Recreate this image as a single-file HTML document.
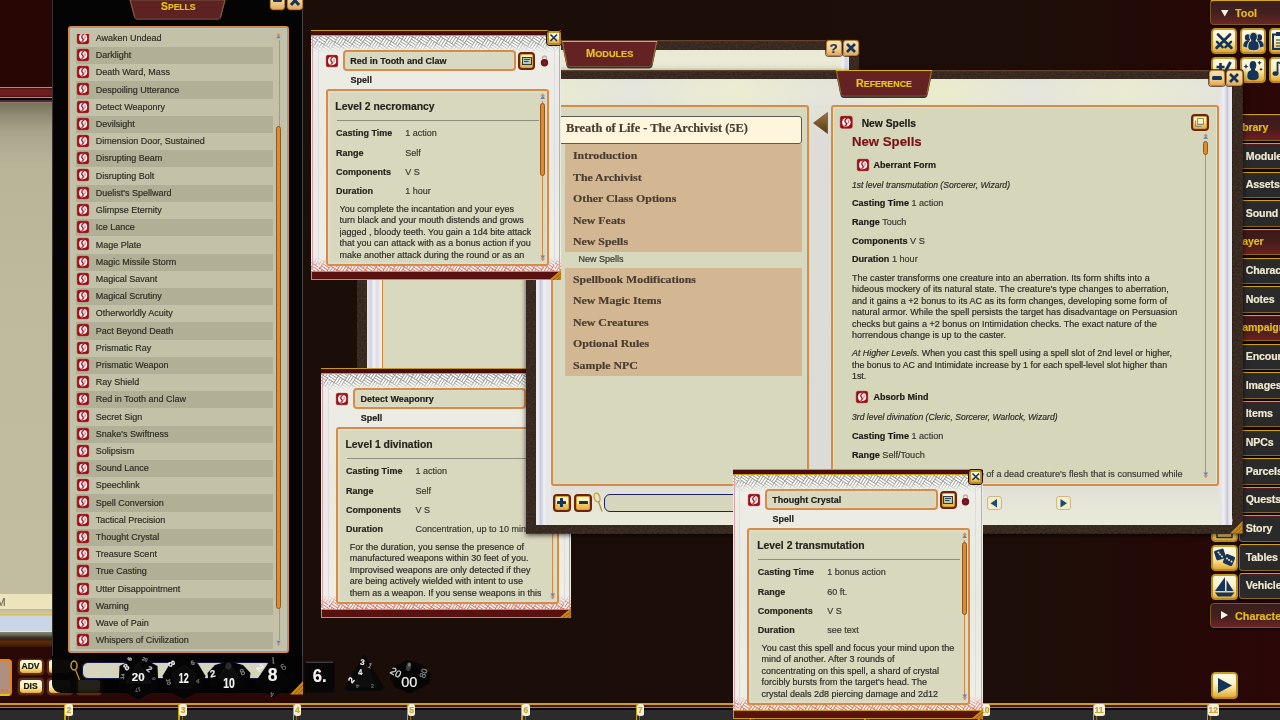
<!DOCTYPE html>
<html><head><meta charset="utf-8"><title>FG</title>
<style>
*{box-sizing:border-box;margin:0;padding:0}
html,body{width:1280px;height:720px;overflow:hidden}
body{position:relative;font-family:"Liberation Sans",sans-serif;font-size:9px;color:#2a2620;
 background:linear-gradient(to right,#1b0d08 0,#1c0d08 760px,#1e0e08 1040px,#210b07 1120px,#260806 1200px,#2b0706 1280px)}
#all{position:absolute;left:0;top:0;width:1280px;height:720px;overflow:hidden;will-change:transform}
.a{position:absolute}
.t{position:absolute;white-space:nowrap;line-height:12px;-webkit-text-stroke:.18px currentColor}
.b{font-weight:700}
.i{font-style:italic}
svg{position:absolute;overflow:visible}
/* frames */
.frm{position:absolute;border:2px solid #d68c48;border-radius:3px;background:#d7d7bc;box-shadow:inset 0 0 0 1px #e2d6ba,inset 0 0 0 2px #d3dccd}
/* list rows */
.row{position:absolute;left:0;height:17.2px;width:193px}
.row.d{background:#b1b096}
.row .t{left:15.5px;top:2.5px;font-size:9px;color:#2e2c24}
.ic{position:absolute;width:12px;height:12px;border-radius:2px;background:#a3181c;border:1px solid #7c0f12;overflow:hidden}
/* small windows */
.win{position:absolute;width:250px;height:250px;background:#eeeee6;overflow:hidden}
.win .top{position:absolute;left:0;top:0;width:100%;height:6px;background:#4a0c0a;border-top:1px solid #c79a14;border-bottom:1px solid #c79a14}
.win .bot{position:absolute;left:0;top:240.500px;width:100%;height:9.500px;background:#5a1210;border-top:1px solid #c79a14;border-bottom:1px solid #c79a14;border-left:1px solid #c79a14}
.win .edgeL{position:absolute;left:1px;top:6px;width:1px;height:234px;background:#d8a0a8}
.win .edgeR{position:absolute;right:1px;top:6px;width:1px;height:234px;background:#d8a0a8}
.win .name{position:absolute;left:31.800px;top:20px;width:173.200px;height:21px;border:2px solid #d68c48;border-radius:4px;background:#d9d9c1;box-shadow:inset 0 0 0 1px #e0dcc4}
.win .name .t{left:5.5px;top:2.5px;font-size:9px;font-weight:700;color:#1e1c18}
.win .lab{left:39.5px;top:43.500px;font-size:9px;font-weight:700;color:#1e1c18}
.win .body{position:absolute;left:14.5px;top:59px;width:223px;height:176.500px;border:2px solid #d68c48;border-radius:3px;background:#d8d8be;box-shadow:inset 0 0 0 1px #e4dcc2,inset 0 0 0 2px #d6dece;overflow:hidden}
.win .body .h{left:7.800px;top:10.300px;font-size:10.400px;font-weight:700;color:#26241e}
.win .body .hr{position:absolute;left:9px;top:28.5px;width:202px;height:1px;background:#8f8f80}
.win .body .k{left:8.400px;font-size:9px;font-weight:700;color:#26241e}
.win .body .v{left:77.800px;font-size:9px;color:#3a382f}
.win .body .p{position:absolute;left:12.100px;top:112.900px;font-size:9px;line-height:11.5px;color:#2e2c26;white-space:nowrap;height:58px;overflow:hidden;-webkit-text-stroke:.18px currentColor}
.sbl{position:absolute;width:1px;background:#c98a4a}
.sbt{position:absolute;width:5px;border-radius:2.5px;background:#e08a2c;border:1px solid #8a5a24}
/* gold buttons */
.gb{position:absolute;border-radius:4.500px;border:2px solid #bc8a1c;border-top-color:#c89a24;background:linear-gradient(#fefae6 0,#fcf3ca 42%,#f4d884 68%,#e2aa38 100%);box-shadow:0 0 0 1px #1e0c06}
.rb{position:absolute;border-radius:4px;border:2px solid #6c2410;background:linear-gradient(#fdf6d4 0,#fbeeb4 50%,#f0c85a 62%,#e6b038 100%);box-shadow:inset 0 0 0 1px #d4a436}
.ob{position:absolute;border-radius:3px;border:1px solid #b08040;background:linear-gradient(#f8e2b0 0,#f2cf8c 55%,#e4a85c 100%);box-shadow:0 0 0 1px rgba(60,30,10,.7)}
/* sidebar */
.sb{position:absolute;left:1239px;width:44px;height:26.500px;background:#2a2a2a;border:1px solid #8a6814;border-top:1.500px solid #d4a20c;border-radius:3px 0 0 3px;box-shadow:0 0 0 1px #0c0604,inset 0 1px 0 #5a1a1a}
.sb .t{left:5.700px;top:5.700px;font-size:10.6px;font-weight:700;color:#f1ead0;letter-spacing:-.1px}
.sb.hd{background:linear-gradient(#3a1a1a 0,#451c1c 50%,#6e2020 100%)}
.sb.hd .t{color:#e6be1c;left:2.200px;top:5.500px}
.tab{position:absolute;color:#e8c21e;font-weight:700}
</style></head>
<body>
<div id="all">
<div class="a" style="left:0;top:0;width:52px;height:87px;background:#280603"></div>
<div class="a" style="left:0;top:87px;width:52px;height:1px;background:#c9960a"></div>
<div class="a" style="left:0;top:88px;width:52px;height:9px;background:linear-gradient(#4a0e0e 0,#6e1e1e 2px,#6e1e1e 7px,#4a0e0e 9px)"></div>
<div class="a" style="left:0;top:97px;width:52px;height:1px;background:#c9960a"></div>
<div class="a" style="left:0;top:98px;width:52px;height:2px;background:#0c0408"></div>
<div class="a" style="left:0;top:100px;width:52px;height:1.500px;background:#3c2c44"></div>
<div class="a" style="left:0;top:101.500px;width:52px;height:1px;background:#9c7a64"></div>
<div class="a" style="left:0;top:102.500px;width:52px;height:492px;background:linear-gradient(#77735c 0,#8f8b72 12px,#aaa58a 30px,#b9b498 60px,#bfba9e 200px,#c2bda1 492px)"></div>
<div class="a" style="left:0;top:594px;width:52px;height:15px;background:#ece4ba"></div>
<div class="t" style="left:-3.500px;top:594.500px;font-size:11px;color:#6e6a5c;line-height:14px">M</div>
<div class="a" style="left:0;top:609px;width:52px;height:7px;background:linear-gradient(#bdb594 0,#cbc3a0 3px,#cfc7a4 4.500px,#d8c35a 5px,#d8c35a 6px,#c9c6b0 6px)"></div>
<div class="a" style="left:0;top:616px;width:52px;height:15px;background:#c8d6e8"></div>
<div class="a" style="left:0;top:630.500px;width:52px;height:1px;background:#e4e4e0"></div>
<div class="a" style="left:0;top:631.500px;width:52px;height:8px;background:linear-gradient(#8a846c 0,#6a6552 3px,#3c382e 5px,#2a2018 8px)"></div>
<div class="a" style="left:0;top:639px;width:52px;height:7.500px;background:linear-gradient(#3a1a08 0,#5a2a0a 2px,#532508 5px,#3a1606 7.500px)"></div>
<div class="a" style="left:0;top:646.500px;width:302px;height:57px;background:#2a0806"></div>
<div class="a" style="left:-6px;top:658.500px;width:18px;height:37px;border:2px solid #e8820e;border-bottom-color:#e8c010;border-radius:4px;background:#ae8f80"></div>
<div class="a" style="left:1px;top:689px;width:3px;height:3px;border-radius:2px;background:#e8780c"></div><div class="a" style="left:5px;top:689px;width:3px;height:3px;border-radius:2px;background:#e8780c"></div>
<div class="a" style="left:17.5px;top:658.5px;width:26px;height:16.500px;border-radius:4px;background:#5e2a18;box-shadow:0 0 0 1px #3a1208"></div>
<div class="a" style="left:19.5px;top:660.0px;width:22px;height:13px;border-radius:3px;background:linear-gradient(#fffbe0 0,#fdf2bc 50%,#f2cf6c 80%,#dfa838 100%)"></div>
<div class="t b" style="left:17.5px;top:661.0px;width:26px;text-align:center;font-size:8.500px;color:#1a1408;line-height:11px">ADV</div>
<div class="a" style="left:17.5px;top:678px;width:26px;height:16.500px;border-radius:4px;background:#5e2a18;box-shadow:0 0 0 1px #3a1208"></div>
<div class="a" style="left:19.5px;top:679.5px;width:22px;height:13px;border-radius:3px;background:linear-gradient(#fffbe0 0,#fdf2bc 50%,#f2cf6c 80%,#dfa838 100%)"></div>
<div class="t b" style="left:17.5px;top:680.5px;width:26px;text-align:center;font-size:8.500px;color:#1a1408;line-height:11px">DIS</div>
<div class="a" style="left:46.5px;top:658.5px;width:26px;height:16.500px;border-radius:4px;background:#5e2a18;box-shadow:0 0 0 1px #3a1208"></div>
<div class="a" style="left:48.5px;top:660.0px;width:22px;height:13px;border-radius:3px;background:linear-gradient(#fffbe0 0,#fdf2bc 50%,#f2cf6c 80%,#dfa838 100%)"></div>
<div class="a" style="left:46.5px;top:678px;width:26px;height:16.500px;border-radius:4px;background:#5e2a18;box-shadow:0 0 0 1px #3a1208"></div>
<div class="a" style="left:48.5px;top:679.5px;width:22px;height:13px;border-radius:3px;background:linear-gradient(#fffbe0 0,#fdf2bc 50%,#f2cf6c 80%,#dfa838 100%)"></div>
<div class="a" style="left:75.5px;top:678px;width:26px;height:16.500px;border-radius:4px;background:#5e2a18;box-shadow:0 0 0 1px #3a1208"></div>
<div class="a" style="left:77.5px;top:679.5px;width:22px;height:13px;border-radius:3px;background:linear-gradient(#fffbe0 0,#fdf2bc 50%,#f2cf6c 80%,#dfa838 100%)"></div>
<div class="a" style="left:0;top:702.500px;width:1280px;height:2px;background:#c9a012"></div>
<div class="a" style="left:0;top:704.500px;width:1280px;height:3px;background:#4a1424"></div>
<div class="a" style="left:0;top:707px;width:1280px;height:1px;background:#a8843c"></div>
<div class="a" style="left:0;top:708px;width:1280px;height:1.500px;background:#080606"></div>
<div class="a" style="left:0;top:709.500px;width:1280px;height:11px;background:#2b2b2b"></div>
<div class="a" style="left:64.2px;top:704px;width:1.500px;height:16px;background:#c9a012"></div>
<div class="a" style="left:67.7px;top:712px;width:1px;height:8px;background:#8a6a10"></div>
<div class="a" style="left:65.2px;top:704px;width:7.5px;height:12px;border-radius:2.500px;background:#f4f0dc"></div>
<div class="t b" style="left:65.2px;top:704.500px;width:7.5px;text-align:center;font-size:8.500px;line-height:11px;color:#c8a428">2</div>
<div class="a" style="left:178.4px;top:704px;width:1.500px;height:16px;background:#c9a012"></div>
<div class="a" style="left:181.9px;top:712px;width:1px;height:8px;background:#8a6a10"></div>
<div class="a" style="left:179.4px;top:704px;width:7.5px;height:12px;border-radius:2.500px;background:#f4f0dc"></div>
<div class="t b" style="left:179.4px;top:704.500px;width:7.5px;text-align:center;font-size:8.500px;line-height:11px;color:#c8a428">3</div>
<div class="a" style="left:292.7px;top:704px;width:1.500px;height:16px;background:#c9a012"></div>
<div class="a" style="left:296.2px;top:712px;width:1px;height:8px;background:#8a6a10"></div>
<div class="a" style="left:293.7px;top:704px;width:7.5px;height:12px;border-radius:2.500px;background:#f4f0dc"></div>
<div class="t b" style="left:293.7px;top:704.500px;width:7.5px;text-align:center;font-size:8.500px;line-height:11px;color:#c8a428">4</div>
<div class="a" style="left:406.9px;top:704px;width:1.500px;height:16px;background:#c9a012"></div>
<div class="a" style="left:410.4px;top:712px;width:1px;height:8px;background:#8a6a10"></div>
<div class="a" style="left:407.9px;top:704px;width:7.5px;height:12px;border-radius:2.500px;background:#f4f0dc"></div>
<div class="t b" style="left:407.9px;top:704.500px;width:7.5px;text-align:center;font-size:8.500px;line-height:11px;color:#c8a428">5</div>
<div class="a" style="left:521.2px;top:704px;width:1.500px;height:16px;background:#c9a012"></div>
<div class="a" style="left:524.7px;top:712px;width:1px;height:8px;background:#8a6a10"></div>
<div class="a" style="left:522.2px;top:704px;width:7.5px;height:12px;border-radius:2.500px;background:#f4f0dc"></div>
<div class="t b" style="left:522.2px;top:704.500px;width:7.5px;text-align:center;font-size:8.500px;line-height:11px;color:#c8a428">6</div>
<div class="a" style="left:635.5px;top:704px;width:1.500px;height:16px;background:#c9a012"></div>
<div class="a" style="left:639.0px;top:712px;width:1px;height:8px;background:#8a6a10"></div>
<div class="a" style="left:636.5px;top:704px;width:7.5px;height:12px;border-radius:2.500px;background:#f4f0dc"></div>
<div class="t b" style="left:636.5px;top:704.500px;width:7.5px;text-align:center;font-size:8.500px;line-height:11px;color:#c8a428">7</div>
<div class="a" style="left:749.7px;top:704px;width:1.500px;height:16px;background:#c9a012"></div>
<div class="a" style="left:753.2px;top:712px;width:1px;height:8px;background:#8a6a10"></div>
<div class="a" style="left:750.7px;top:704px;width:7.5px;height:12px;border-radius:2.500px;background:#f4f0dc"></div>
<div class="t b" style="left:750.7px;top:704.500px;width:7.5px;text-align:center;font-size:8.500px;line-height:11px;color:#c8a428">8</div>
<div class="a" style="left:864.0px;top:704px;width:1.500px;height:16px;background:#c9a012"></div>
<div class="a" style="left:867.5px;top:712px;width:1px;height:8px;background:#8a6a10"></div>
<div class="a" style="left:865.0px;top:704px;width:7.5px;height:12px;border-radius:2.500px;background:#f4f0dc"></div>
<div class="t b" style="left:865.0px;top:704.500px;width:7.5px;text-align:center;font-size:8.500px;line-height:11px;color:#c8a428">9</div>
<div class="a" style="left:978.2px;top:704px;width:1.500px;height:16px;background:#c9a012"></div>
<div class="a" style="left:981.7px;top:712px;width:1px;height:8px;background:#8a6a10"></div>
<div class="a" style="left:979.2px;top:704px;width:11px;height:12px;border-radius:2.500px;background:#f4f0dc"></div>
<div class="t b" style="left:979.2px;top:704.500px;width:11px;text-align:center;font-size:8.500px;line-height:11px;color:#c8a428">10</div>
<div class="a" style="left:1092.5px;top:704px;width:1.500px;height:16px;background:#c9a012"></div>
<div class="a" style="left:1096.0px;top:712px;width:1px;height:8px;background:#8a6a10"></div>
<div class="a" style="left:1093.5px;top:704px;width:11px;height:12px;border-radius:2.500px;background:#f4f0dc"></div>
<div class="t b" style="left:1093.5px;top:704.500px;width:11px;text-align:center;font-size:8.500px;line-height:11px;color:#c8a428">11</div>
<div class="a" style="left:1206.7px;top:704px;width:1.500px;height:16px;background:#c9a012"></div>
<div class="a" style="left:1210.2px;top:712px;width:1px;height:8px;background:#8a6a10"></div>
<div class="a" style="left:1207.7px;top:704px;width:11px;height:12px;border-radius:2.500px;background:#f4f0dc"></div>
<div class="t b" style="left:1207.7px;top:704.500px;width:11px;text-align:center;font-size:8.500px;line-height:11px;color:#c8a428">12</div>
<svg width="0" height="0" style="position:absolute"><defs><symbol id="hb" viewBox="0 0 250 18" overflow="hidden"><path d="M-3.7 -8.6 L2.8 -4.4 L1.4 -2.2 L-5.1 -6.4ZM-5.1 -6.4 L1.4 -2.2 L-0.0 0.0 L-6.5 -4.2ZM-4.4 -2.8 L-2.2 -1.4 L-6.4 5.1 L-8.6 3.7ZM-2.2 -1.4 L0.0 0.0 L-4.2 6.5 L-6.4 5.1ZM5.7 -8.7 L12.2 -4.5 L10.8 -2.3 L4.2 -6.5ZM4.2 -6.5 L6.4 -5.1 L2.2 1.4 L0.0 0.0ZM6.4 -5.1 L8.6 -3.7 L4.4 2.8 L2.2 1.4ZM8.6 -3.7 L10.8 -2.3 L6.5 4.2 L4.4 2.8ZM0.0 0.0 L6.5 4.2 L5.1 6.4 L-1.4 2.2ZM-1.4 2.2 L5.1 6.4 L3.7 8.6 L-2.8 4.4ZM-2.8 4.4 L3.7 8.6 L2.3 10.8 L-4.2 6.5ZM-4.2 6.5 L-2.1 8.0 L-6.3 14.5 L-8.5 13.1ZM-2.1 8.0 L0.1 9.4 L-4.1 15.9 L-6.3 14.5ZM0.1 9.4 L2.3 10.8 L-2.0 17.3 L-4.1 15.9ZM-8.5 13.1 L-2.0 17.3 L-3.4 19.5 L-9.9 15.3ZM15.0 -8.8 L17.2 -7.4 L13.0 -0.9 L10.8 -2.3ZM17.2 -7.4 L19.4 -6.0 L15.2 0.5 L13.0 -0.9ZM19.4 -6.0 L21.6 -4.6 L17.3 2.0 L15.2 0.5ZM10.8 -2.3 L17.3 2.0 L15.9 4.1 L9.4 -0.1ZM9.4 -0.1 L15.9 4.1 L14.5 6.3 L8.0 2.1ZM8.0 2.1 L14.5 6.3 L13.1 8.5 L6.5 4.2ZM6.5 4.2 L8.7 5.7 L4.5 12.2 L2.3 10.8ZM8.7 5.7 L10.9 7.1 L6.7 13.6 L4.5 12.2ZM10.9 7.1 L13.1 8.5 L8.8 15.0 L6.7 13.6ZM2.3 10.8 L8.8 15.0 L7.4 17.2 L0.9 13.0ZM0.9 13.0 L7.4 17.2 L6.0 19.4 L-0.5 15.2ZM-0.5 15.2 L6.0 19.4 L4.6 21.6 L-2.0 17.3ZM-2.0 17.3 L0.2 18.7 L-4.0 25.3 L-6.2 23.9ZM0.2 18.7 L2.4 20.2 L-1.8 26.7 L-4.0 25.3ZM28.0 -9.7 L30.2 -8.3 L25.9 -1.8 L23.8 -3.2ZM30.2 -8.3 L32.4 -6.9 L28.1 -0.3 L25.9 -1.8ZM21.6 -4.6 L28.1 -0.3 L26.7 1.8 L20.2 -2.4ZM20.2 -2.4 L26.7 1.8 L25.3 4.0 L18.7 -0.2ZM18.7 -0.2 L25.3 4.0 L23.9 6.2 L17.3 2.0ZM17.3 2.0 L19.5 3.4 L15.3 9.9 L13.1 8.5ZM19.5 3.4 L21.7 4.8 L17.4 11.3 L15.3 9.9ZM21.7 4.8 L23.9 6.2 L19.6 12.7 L17.4 11.3ZM13.1 8.5 L19.6 12.7 L18.2 14.9 L11.7 10.7ZM11.7 10.7 L18.2 14.9 L16.8 17.1 L10.3 12.9ZM10.3 12.9 L16.8 17.1 L15.4 19.3 L8.8 15.0ZM8.8 15.0 L11.0 16.5 L6.8 23.0 L4.6 21.6ZM11.0 16.5 L13.2 17.9 L8.9 24.4 L6.8 23.0ZM13.2 17.9 L15.4 19.3 L11.1 25.8 L8.9 24.4ZM32.4 -6.9 L38.9 -2.6 L37.5 -0.5 L31.0 -4.7ZM31.0 -4.7 L37.5 -0.5 L36.1 1.7 L29.5 -2.5ZM29.5 -2.5 L36.1 1.7 L34.7 3.9 L28.1 -0.3ZM28.1 -0.3 L30.3 1.1 L26.1 7.6 L23.9 6.2ZM30.3 1.1 L32.5 2.5 L28.2 9.0 L26.1 7.6ZM32.5 2.5 L34.7 3.9 L30.4 10.5 L28.2 9.0ZM23.9 6.2 L30.4 10.5 L29.0 12.6 L22.5 8.4ZM22.5 8.4 L29.0 12.6 L27.6 14.8 L21.0 10.6ZM21.0 10.6 L27.6 14.8 L26.2 17.0 L19.6 12.7ZM19.6 12.7 L21.8 14.2 L17.6 20.7 L15.4 19.3ZM21.8 14.2 L24.0 15.6 L19.7 22.1 L17.6 20.7ZM24.0 15.6 L26.2 17.0 L21.9 23.5 L19.7 22.1ZM15.4 19.3 L21.9 23.5 L20.5 25.7 L14.0 21.5ZM43.2 -9.2 L49.7 -4.9 L48.3 -2.7 L41.7 -7.0ZM41.7 -7.0 L48.3 -2.7 L46.9 -0.6 L40.3 -4.8ZM40.3 -4.8 L46.9 -0.6 L45.5 1.6 L38.9 -2.6ZM38.9 -2.6 L41.1 -1.2 L36.8 5.3 L34.7 3.9ZM41.1 -1.2 L43.3 0.2 L39.0 6.7 L36.8 5.3ZM43.3 0.2 L45.5 1.6 L41.2 8.2 L39.0 6.7ZM34.7 3.9 L41.2 8.2 L39.8 10.3 L33.2 6.1ZM33.2 6.1 L39.8 10.3 L38.4 12.5 L31.8 8.3ZM31.8 8.3 L38.4 12.5 L37.0 14.7 L30.4 10.5ZM30.4 10.5 L32.6 11.9 L28.3 18.4 L26.2 17.0ZM32.6 11.9 L34.8 13.3 L30.5 19.8 L28.3 18.4ZM34.8 13.3 L37.0 14.7 L32.7 21.2 L30.5 19.8ZM26.2 17.0 L32.7 21.2 L31.3 23.4 L24.8 19.2ZM24.8 19.2 L31.3 23.4 L29.9 25.6 L23.3 21.4ZM51.1 -7.1 L57.7 -2.9 L56.2 -0.7 L49.7 -4.9ZM49.7 -4.9 L51.9 -3.5 L47.6 3.0 L45.5 1.6ZM51.9 -3.5 L54.1 -2.1 L49.8 4.4 L47.6 3.0ZM54.1 -2.1 L56.2 -0.7 L52.0 5.9 L49.8 4.4ZM45.5 1.6 L52.0 5.9 L50.6 8.0 L44.0 3.8ZM44.0 3.8 L50.6 8.0 L49.2 10.2 L42.6 6.0ZM42.6 6.0 L49.2 10.2 L47.7 12.4 L41.2 8.2ZM41.2 8.2 L43.4 9.6 L39.1 16.1 L37.0 14.7ZM43.4 9.6 L45.6 11.0 L41.3 17.5 L39.1 16.1ZM45.6 11.0 L47.7 12.4 L43.5 18.9 L41.3 17.5ZM37.0 14.7 L43.5 18.9 L42.1 21.1 L35.5 16.9ZM35.5 16.9 L42.1 21.1 L40.7 23.3 L34.1 19.1ZM34.1 19.1 L40.7 23.3 L39.2 25.5 L32.7 21.2ZM60.5 -7.2 L62.7 -5.8 L58.4 0.7 L56.2 -0.7ZM62.7 -5.8 L64.9 -4.4 L60.6 2.2 L58.4 0.7ZM64.9 -4.4 L67.0 -3.0 L62.8 3.6 L60.6 2.2ZM56.2 -0.7 L62.8 3.6 L61.4 5.8 L54.8 1.5ZM54.8 1.5 L61.4 5.8 L60.0 7.9 L53.4 3.7ZM53.4 3.7 L60.0 7.9 L58.5 10.1 L52.0 5.9ZM52.0 5.9 L54.2 7.3 L49.9 13.8 L47.7 12.4ZM54.2 7.3 L56.4 8.7 L52.1 15.2 L49.9 13.8ZM56.4 8.7 L58.5 10.1 L54.3 16.7 L52.1 15.2ZM47.7 12.4 L54.3 16.7 L52.9 18.8 L46.3 14.6ZM46.3 14.6 L52.9 18.8 L51.5 21.0 L44.9 16.8ZM44.9 16.8 L51.5 21.0 L50.0 23.2 L43.5 18.9ZM43.5 18.9 L45.7 20.4 L41.4 26.9 L39.2 25.5ZM71.3 -9.5 L73.5 -8.1 L69.2 -1.6 L67.0 -3.0ZM73.5 -8.1 L75.6 -6.7 L71.4 -0.1 L69.2 -1.6ZM75.6 -6.7 L77.8 -5.3 L73.6 1.3 L71.4 -0.1ZM67.0 -3.0 L73.6 1.3 L72.2 3.5 L65.6 -0.8ZM65.6 -0.8 L72.2 3.5 L70.7 5.6 L64.2 1.4ZM64.2 1.4 L70.7 5.6 L69.3 7.8 L62.8 3.6ZM62.8 3.6 L65.0 5.0 L60.7 11.5 L58.5 10.1ZM65.0 5.0 L67.1 6.4 L62.9 12.9 L60.7 11.5ZM67.1 6.4 L69.3 7.8 L65.1 14.4 L62.9 12.9ZM58.5 10.1 L65.1 14.4 L63.7 16.5 L57.1 12.3ZM57.1 12.3 L63.7 16.5 L62.2 18.7 L55.7 14.5ZM55.7 14.5 L62.2 18.7 L60.8 20.9 L54.3 16.7ZM54.3 16.7 L56.5 18.1 L52.2 24.6 L50.0 23.2ZM56.5 18.1 L58.6 19.5 L54.4 26.0 L52.2 24.6ZM58.6 19.5 L60.8 20.9 L56.6 27.4 L54.4 26.0ZM86.4 -9.0 L88.6 -7.6 L84.4 -1.0 L82.2 -2.4ZM77.8 -5.3 L84.4 -1.0 L82.9 1.2 L76.4 -3.1ZM76.4 -3.1 L82.9 1.2 L81.5 3.3 L75.0 -0.9ZM75.0 -0.9 L81.5 3.3 L80.1 5.5 L73.6 1.3ZM73.6 1.3 L75.8 2.7 L71.5 9.2 L69.3 7.8ZM75.8 2.7 L77.9 4.1 L73.7 10.7 L71.5 9.2ZM77.9 4.1 L80.1 5.5 L75.9 12.1 L73.7 10.7ZM69.3 7.8 L75.9 12.1 L74.5 14.2 L67.9 10.0ZM67.9 10.0 L74.5 14.2 L73.0 16.4 L66.5 12.2ZM66.5 12.2 L73.0 16.4 L71.6 18.6 L65.1 14.4ZM65.1 14.4 L67.3 15.8 L63.0 22.3 L60.8 20.9ZM67.3 15.8 L69.4 17.2 L65.2 23.7 L63.0 22.3ZM69.4 17.2 L71.6 18.6 L67.4 25.2 L65.2 23.7ZM88.6 -7.6 L95.2 -3.3 L93.7 -1.1 L87.2 -5.4ZM87.2 -5.4 L93.7 -1.1 L92.3 1.1 L85.8 -3.2ZM85.8 -3.2 L92.3 1.1 L90.9 3.2 L84.4 -1.0ZM84.4 -1.0 L86.5 0.4 L82.3 6.9 L80.1 5.5ZM86.5 0.4 L88.7 1.8 L84.5 8.4 L82.3 6.9ZM88.7 1.8 L90.9 3.2 L86.7 9.8 L84.5 8.4ZM80.1 5.5 L86.7 9.8 L85.2 12.0 L78.7 7.7ZM78.7 7.7 L85.2 12.0 L83.8 14.1 L77.3 9.9ZM77.3 9.9 L83.8 14.1 L82.4 16.3 L75.9 12.1ZM75.9 12.1 L78.0 13.5 L73.8 20.0 L71.6 18.6ZM78.0 13.5 L80.2 14.9 L76.0 21.4 L73.8 20.0ZM80.2 14.9 L82.4 16.3 L78.2 22.9 L76.0 21.4ZM71.6 18.6 L78.2 22.9 L76.7 25.0 L70.2 20.8ZM98.0 -7.7 L104.5 -3.4 L103.1 -1.2 L96.6 -5.5ZM96.6 -5.5 L103.1 -1.2 L101.7 0.9 L95.2 -3.3ZM95.2 -3.3 L97.3 -1.9 L93.1 4.6 L90.9 3.2ZM97.3 -1.9 L99.5 -0.5 L95.3 6.1 L93.1 4.6ZM99.5 -0.5 L101.7 0.9 L97.4 7.5 L95.3 6.1ZM90.9 3.2 L97.4 7.5 L96.0 9.7 L89.5 5.4ZM89.5 5.4 L96.0 9.7 L94.6 11.8 L88.1 7.6ZM88.1 7.6 L94.6 11.8 L93.2 14.0 L86.7 9.8ZM86.7 9.8 L88.8 11.2 L84.6 17.7 L82.4 16.3ZM88.8 11.2 L91.0 12.6 L86.8 19.1 L84.6 17.7ZM91.0 12.6 L93.2 14.0 L89.0 20.6 L86.8 19.1ZM82.4 16.3 L89.0 20.6 L87.5 22.7 L81.0 18.5ZM81.0 18.5 L87.5 22.7 L86.1 24.9 L79.6 20.7ZM79.6 20.7 L86.1 24.9 L84.7 27.1 L78.2 22.9ZM107.4 -7.8 L113.9 -3.5 L112.5 -1.4 L105.9 -5.6ZM105.9 -5.6 L108.1 -4.2 L103.9 2.4 L101.7 0.9ZM108.1 -4.2 L110.3 -2.8 L106.1 3.8 L103.9 2.4ZM110.3 -2.8 L112.5 -1.4 L108.2 5.2 L106.1 3.8ZM101.7 0.9 L108.2 5.2 L106.8 7.4 L100.3 3.1ZM100.3 3.1 L106.8 7.4 L105.4 9.5 L98.9 5.3ZM98.9 5.3 L105.4 9.5 L104.0 11.7 L97.4 7.5ZM97.4 7.5 L99.6 8.9 L95.4 15.4 L93.2 14.0ZM99.6 8.9 L101.8 10.3 L97.6 16.9 L95.4 15.4ZM101.8 10.3 L104.0 11.7 L99.7 18.3 L97.6 16.9ZM93.2 14.0 L99.7 18.3 L98.3 20.5 L91.8 16.2ZM91.8 16.2 L98.3 20.5 L96.9 22.6 L90.4 18.4ZM90.4 18.4 L96.9 22.6 L95.5 24.8 L89.0 20.6ZM116.7 -7.9 L118.9 -6.5 L114.7 0.1 L112.5 -1.4ZM118.9 -6.5 L121.1 -5.1 L116.8 1.5 L114.7 0.1ZM121.1 -5.1 L123.3 -3.6 L119.0 2.9 L116.8 1.5ZM112.5 -1.4 L119.0 2.9 L117.6 5.1 L111.1 0.8ZM111.1 0.8 L117.6 5.1 L116.2 7.3 L109.7 3.0ZM109.7 3.0 L116.2 7.3 L114.8 9.4 L108.2 5.2ZM108.2 5.2 L110.4 6.6 L106.2 13.1 L104.0 11.7ZM110.4 6.6 L112.6 8.0 L108.3 14.6 L106.2 13.1ZM112.6 8.0 L114.8 9.4 L110.5 16.0 L108.3 14.6ZM104.0 11.7 L110.5 16.0 L109.1 18.2 L102.6 13.9ZM102.6 13.9 L109.1 18.2 L107.7 20.3 L101.2 16.1ZM101.2 16.1 L107.7 20.3 L106.3 22.5 L99.7 18.3ZM99.7 18.3 L101.9 19.7 L97.7 26.2 L95.5 24.8ZM101.9 19.7 L104.1 21.1 L99.9 27.6 L97.7 26.2ZM129.7 -8.8 L131.9 -7.4 L127.6 -0.8 L125.5 -2.2ZM131.9 -7.4 L134.1 -5.9 L129.8 0.6 L127.6 -0.8ZM123.3 -3.6 L129.8 0.6 L128.4 2.8 L121.9 -1.5ZM121.9 -1.5 L128.4 2.8 L127.0 5.0 L120.4 0.7ZM120.4 0.7 L127.0 5.0 L125.6 7.1 L119.0 2.9ZM119.0 2.9 L121.2 4.3 L117.0 10.9 L114.8 9.4ZM121.2 4.3 L123.4 5.7 L119.1 12.3 L117.0 10.9ZM123.4 5.7 L125.6 7.1 L121.3 13.7 L119.1 12.3ZM114.8 9.4 L121.3 13.7 L119.9 15.9 L113.4 11.6ZM113.4 11.6 L119.9 15.9 L118.5 18.0 L111.9 13.8ZM111.9 13.8 L118.5 18.0 L117.1 20.2 L110.5 16.0ZM110.5 16.0 L112.7 17.4 L108.5 23.9 L106.3 22.5ZM112.7 17.4 L114.9 18.8 L110.6 25.4 L108.5 23.9ZM114.9 18.8 L117.1 20.2 L112.8 26.8 L110.6 25.4ZM142.7 -9.7 L144.9 -8.2 L140.6 -1.7 L138.4 -3.1ZM134.1 -5.9 L140.6 -1.7 L139.2 0.5 L132.6 -3.8ZM132.6 -3.8 L139.2 0.5 L137.8 2.7 L131.2 -1.6ZM131.2 -1.6 L137.8 2.7 L136.4 4.8 L129.8 0.6ZM129.8 0.6 L132.0 2.0 L127.7 8.6 L125.6 7.1ZM132.0 2.0 L134.2 3.4 L129.9 10.0 L127.7 8.6ZM134.2 3.4 L136.4 4.8 L132.1 11.4 L129.9 10.0ZM125.6 7.1 L132.1 11.4 L130.7 13.6 L124.2 9.3ZM124.2 9.3 L130.7 13.6 L129.3 15.8 L122.7 11.5ZM122.7 11.5 L129.3 15.8 L127.9 17.9 L121.3 13.7ZM121.3 13.7 L123.5 15.1 L119.3 21.6 L117.1 20.2ZM123.5 15.1 L125.7 16.5 L121.4 23.1 L119.3 21.6ZM125.7 16.5 L127.9 17.9 L123.6 24.5 L121.4 23.1ZM117.1 20.2 L123.6 24.5 L122.2 26.7 L115.7 22.4ZM144.9 -8.2 L151.4 -4.0 L150.0 -1.8 L143.4 -6.1ZM143.4 -6.1 L150.0 -1.8 L148.6 0.4 L142.0 -3.9ZM142.0 -3.9 L148.6 0.4 L147.1 2.6 L140.6 -1.7ZM140.6 -1.7 L142.8 -0.3 L138.5 6.3 L136.4 4.8ZM142.8 -0.3 L145.0 1.1 L140.7 7.7 L138.5 6.3ZM145.0 1.1 L147.1 2.6 L142.9 9.1 L140.7 7.7ZM136.4 4.8 L142.9 9.1 L141.5 11.3 L134.9 7.0ZM134.9 7.0 L141.5 11.3 L140.1 13.5 L133.5 9.2ZM133.5 9.2 L140.1 13.5 L138.7 15.6 L132.1 11.4ZM132.1 11.4 L134.3 12.8 L130.0 19.3 L127.9 17.9ZM134.3 12.8 L136.5 14.2 L132.2 20.8 L130.0 19.3ZM136.5 14.2 L138.7 15.6 L134.4 22.2 L132.2 20.8ZM127.9 17.9 L134.4 22.2 L133.0 24.4 L126.4 20.1ZM126.4 20.1 L133.0 24.4 L131.6 26.5 L125.0 22.3ZM154.2 -8.3 L160.8 -4.1 L159.4 -1.9 L152.8 -6.2ZM152.8 -6.2 L159.4 -1.9 L157.9 0.3 L151.4 -4.0ZM151.4 -4.0 L153.6 -2.6 L149.3 4.0 L147.1 2.6ZM153.6 -2.6 L155.8 -1.2 L151.5 5.4 L149.3 4.0ZM155.8 -1.2 L157.9 0.3 L153.7 6.8 L151.5 5.4ZM147.1 2.6 L153.7 6.8 L152.3 9.0 L145.7 4.7ZM145.7 4.7 L152.3 9.0 L150.9 11.2 L144.3 6.9ZM144.3 6.9 L150.9 11.2 L149.4 13.3 L142.9 9.1ZM142.9 9.1 L145.1 10.5 L140.8 17.1 L138.7 15.6ZM145.1 10.5 L147.3 11.9 L143.0 18.5 L140.8 17.1ZM147.3 11.9 L149.4 13.3 L145.2 19.9 L143.0 18.5ZM138.7 15.6 L145.2 19.9 L143.8 22.1 L137.2 17.8ZM137.2 17.8 L143.8 22.1 L142.4 24.2 L135.8 20.0ZM135.8 20.0 L142.4 24.2 L140.9 26.4 L134.4 22.2ZM163.6 -8.5 L170.1 -4.2 L168.7 -2.0 L162.2 -6.3ZM162.2 -6.3 L164.4 -4.9 L160.1 1.7 L157.9 0.3ZM164.4 -4.9 L166.5 -3.4 L162.3 3.1 L160.1 1.7ZM166.5 -3.4 L168.7 -2.0 L164.5 4.5 L162.3 3.1ZM157.9 0.3 L164.5 4.5 L163.1 6.7 L156.5 2.4ZM156.5 2.4 L163.1 6.7 L161.6 8.9 L155.1 4.6ZM155.1 4.6 L161.6 8.9 L160.2 11.1 L153.7 6.8ZM153.7 6.8 L155.9 8.2 L151.6 14.8 L149.4 13.3ZM155.9 8.2 L158.1 9.6 L153.8 16.2 L151.6 14.8ZM158.1 9.6 L160.2 11.1 L156.0 17.6 L153.8 16.2ZM149.4 13.3 L156.0 17.6 L154.6 19.8 L148.0 15.5ZM148.0 15.5 L154.6 19.8 L153.2 22.0 L146.6 17.7ZM146.6 17.7 L153.2 22.0 L151.7 24.1 L145.2 19.9ZM145.2 19.9 L147.4 21.3 L143.1 27.8 L140.9 26.4ZM173.0 -8.6 L175.2 -7.2 L170.9 -0.6 L168.7 -2.0ZM175.2 -7.2 L177.3 -5.7 L173.1 0.8 L170.9 -0.6ZM177.3 -5.7 L179.5 -4.3 L175.3 2.2 L173.1 0.8ZM168.7 -2.0 L175.3 2.2 L173.9 4.4 L167.3 0.1ZM167.3 0.1 L173.9 4.4 L172.4 6.6 L165.9 2.3ZM165.9 2.3 L172.4 6.6 L171.0 8.8 L164.5 4.5ZM164.5 4.5 L166.7 5.9 L162.4 12.5 L160.2 11.1ZM166.7 5.9 L168.8 7.3 L164.6 13.9 L162.4 12.5ZM168.8 7.3 L171.0 8.8 L166.8 15.3 L164.6 13.9ZM160.2 11.1 L166.8 15.3 L165.4 17.5 L158.8 13.2ZM158.8 13.2 L165.4 17.5 L163.9 19.7 L157.4 15.4ZM157.4 15.4 L163.9 19.7 L162.5 21.8 L156.0 17.6ZM156.0 17.6 L158.2 19.0 L153.9 25.6 L151.7 24.1ZM158.2 19.0 L160.3 20.4 L156.1 27.0 L153.9 25.6ZM185.9 -9.5 L188.1 -8.0 L183.9 -1.5 L181.7 -2.9ZM188.1 -8.0 L190.3 -6.6 L186.1 -0.1 L183.9 -1.5ZM179.5 -4.3 L186.1 -0.1 L184.6 2.1 L178.1 -2.1ZM178.1 -2.1 L184.6 2.1 L183.2 4.3 L176.7 0.0ZM176.7 0.0 L183.2 4.3 L181.8 6.5 L175.3 2.2ZM175.3 2.2 L177.4 3.6 L173.2 10.2 L171.0 8.8ZM177.4 3.6 L179.6 5.0 L175.4 11.6 L173.2 10.2ZM179.6 5.0 L181.8 6.5 L177.6 13.0 L175.4 11.6ZM171.0 8.8 L177.6 13.0 L176.1 15.2 L169.6 10.9ZM169.6 10.9 L176.1 15.2 L174.7 17.4 L168.2 13.1ZM168.2 13.1 L174.7 17.4 L173.3 19.5 L166.8 15.3ZM166.8 15.3 L169.0 16.7 L164.7 23.3 L162.5 21.8ZM169.0 16.7 L171.1 18.1 L166.9 24.7 L164.7 23.3ZM171.1 18.1 L173.3 19.5 L169.1 26.1 L166.9 24.7ZM190.3 -6.6 L196.8 -2.4 L195.4 -0.2 L188.9 -4.4ZM188.9 -4.4 L195.4 -0.2 L194.0 2.0 L187.5 -2.3ZM187.5 -2.3 L194.0 2.0 L192.6 4.2 L186.1 -0.1ZM186.1 -0.1 L188.2 1.3 L184.0 7.9 L181.8 6.5ZM188.2 1.3 L190.4 2.8 L186.2 9.3 L184.0 7.9ZM190.4 2.8 L192.6 4.2 L188.4 10.7 L186.2 9.3ZM181.8 6.5 L188.4 10.7 L186.9 12.9 L180.4 8.6ZM180.4 8.6 L186.9 12.9 L185.5 15.1 L179.0 10.8ZM179.0 10.8 L185.5 15.1 L184.1 17.3 L177.6 13.0ZM177.6 13.0 L179.7 14.4 L175.5 21.0 L173.3 19.5ZM179.7 14.4 L181.9 15.8 L177.7 22.4 L175.5 21.0ZM181.9 15.8 L184.1 17.3 L179.9 23.8 L177.7 22.4ZM173.3 19.5 L179.9 23.8 L178.4 26.0 L171.9 21.7ZM201.1 -8.9 L207.6 -4.7 L206.2 -2.5 L199.7 -6.7ZM199.7 -6.7 L206.2 -2.5 L204.8 -0.3 L198.3 -4.6ZM198.3 -4.6 L204.8 -0.3 L203.4 1.9 L196.8 -2.4ZM196.8 -2.4 L199.0 -1.0 L194.8 5.6 L192.6 4.2ZM199.0 -1.0 L201.2 0.5 L197.0 7.0 L194.8 5.6ZM201.2 0.5 L203.4 1.9 L199.1 8.4 L197.0 7.0ZM192.6 4.2 L199.1 8.4 L197.7 10.6 L191.2 6.4ZM191.2 6.4 L197.7 10.6 L196.3 12.8 L189.8 8.5ZM189.8 8.5 L196.3 12.8 L194.9 15.0 L188.4 10.7ZM188.4 10.7 L190.5 12.1 L186.3 18.7 L184.1 17.3ZM190.5 12.1 L192.7 13.5 L188.5 20.1 L186.3 18.7ZM192.7 13.5 L194.9 15.0 L190.6 21.5 L188.5 20.1ZM184.1 17.3 L190.6 21.5 L189.2 23.7 L182.7 19.4ZM182.7 19.4 L189.2 23.7 L187.8 25.9 L181.3 21.6ZM210.5 -9.0 L217.0 -4.8 L215.6 -2.6 L209.1 -6.8ZM209.1 -6.8 L215.6 -2.6 L214.2 -0.4 L207.6 -4.7ZM207.6 -4.7 L209.8 -3.2 L205.6 3.3 L203.4 1.9ZM209.8 -3.2 L212.0 -1.8 L207.8 4.7 L205.6 3.3ZM212.0 -1.8 L214.2 -0.4 L209.9 6.1 L207.8 4.7ZM203.4 1.9 L209.9 6.1 L208.5 8.3 L202.0 4.1ZM202.0 4.1 L208.5 8.3 L207.1 10.5 L200.6 6.2ZM200.6 6.2 L207.1 10.5 L205.7 12.7 L199.1 8.4ZM199.1 8.4 L201.3 9.8 L197.1 16.4 L194.9 15.0ZM201.3 9.8 L203.5 11.3 L199.3 17.8 L197.1 16.4ZM203.5 11.3 L205.7 12.7 L201.4 19.2 L199.3 17.8ZM194.9 15.0 L201.4 19.2 L200.0 21.4 L193.5 17.1ZM193.5 17.1 L200.0 21.4 L198.6 23.6 L192.1 19.3ZM192.1 19.3 L198.6 23.6 L197.2 25.8 L190.6 21.5ZM219.8 -9.1 L226.4 -4.9 L225.0 -2.7 L218.4 -7.0ZM218.4 -7.0 L220.6 -5.5 L216.4 1.0 L214.2 -0.4ZM220.6 -5.5 L222.8 -4.1 L218.5 2.4 L216.4 1.0ZM222.8 -4.1 L225.0 -2.7 L220.7 3.8 L218.5 2.4ZM214.2 -0.4 L220.7 3.8 L219.3 6.0 L212.8 1.8ZM212.8 1.8 L219.3 6.0 L217.9 8.2 L211.3 3.9ZM211.3 3.9 L217.9 8.2 L216.5 10.4 L209.9 6.1ZM209.9 6.1 L212.1 7.5 L207.9 14.1 L205.7 12.7ZM212.1 7.5 L214.3 9.0 L210.0 15.5 L207.9 14.1ZM214.3 9.0 L216.5 10.4 L212.2 16.9 L210.0 15.5ZM205.7 12.7 L212.2 16.9 L210.8 19.1 L204.3 14.8ZM204.3 14.8 L210.8 19.1 L209.4 21.3 L202.9 17.0ZM202.9 17.0 L209.4 21.3 L208.0 23.5 L201.4 19.2ZM201.4 19.2 L203.6 20.6 L199.4 27.2 L197.2 25.8ZM229.2 -9.3 L231.4 -7.8 L227.2 -1.3 L225.0 -2.7ZM231.4 -7.8 L233.6 -6.4 L229.3 0.1 L227.2 -1.3ZM233.6 -6.4 L235.8 -5.0 L231.5 1.5 L229.3 0.1ZM225.0 -2.7 L231.5 1.5 L230.1 3.7 L223.6 -0.5ZM223.6 -0.5 L230.1 3.7 L228.7 5.9 L222.1 1.7ZM222.1 1.7 L228.7 5.9 L227.3 8.1 L220.7 3.8ZM220.7 3.8 L222.9 5.2 L218.7 11.8 L216.5 10.4ZM222.9 5.2 L225.1 6.7 L220.8 13.2 L218.7 11.8ZM225.1 6.7 L227.3 8.1 L223.0 14.6 L220.8 13.2ZM216.5 10.4 L223.0 14.6 L221.6 16.8 L215.1 12.6ZM215.1 12.6 L221.6 16.8 L220.2 19.0 L213.6 14.7ZM213.6 14.7 L220.2 19.0 L218.8 21.2 L212.2 16.9ZM212.2 16.9 L214.4 18.3 L210.2 24.9 L208.0 23.5ZM214.4 18.3 L216.6 19.7 L212.3 26.3 L210.2 24.9ZM216.6 19.7 L218.8 21.2 L214.5 27.7 L212.3 26.3ZM244.4 -8.7 L246.5 -7.3 L242.3 -0.8 L240.1 -2.2ZM235.8 -5.0 L242.3 -0.8 L240.9 1.4 L234.3 -2.8ZM234.3 -2.8 L240.9 1.4 L239.5 3.6 L232.9 -0.6ZM232.9 -0.6 L239.5 3.6 L238.1 5.8 L231.5 1.5ZM231.5 1.5 L233.7 3.0 L229.4 9.5 L227.3 8.1ZM233.7 3.0 L235.9 4.4 L231.6 10.9 L229.4 9.5ZM235.9 4.4 L238.1 5.8 L233.8 12.3 L231.6 10.9ZM227.3 8.1 L233.8 12.3 L232.4 14.5 L225.8 10.3ZM225.8 10.3 L232.4 14.5 L231.0 16.7 L224.4 12.4ZM224.4 12.4 L231.0 16.7 L229.6 18.9 L223.0 14.6ZM223.0 14.6 L225.2 16.0 L220.9 22.6 L218.8 21.2ZM225.2 16.0 L227.4 17.5 L223.1 24.0 L220.9 22.6ZM227.4 17.5 L229.6 18.9 L225.3 25.4 L223.1 24.0ZM246.5 -7.3 L253.1 -3.0 L251.7 -0.9 L245.1 -5.1ZM245.1 -5.1 L251.7 -0.9 L250.3 1.3 L243.7 -2.9ZM243.7 -2.9 L250.3 1.3 L248.8 3.5 L242.3 -0.8ZM242.3 -0.8 L244.5 0.7 L240.2 7.2 L238.1 5.8ZM244.5 0.7 L246.7 2.1 L242.4 8.6 L240.2 7.2ZM246.7 2.1 L248.8 3.5 L244.6 10.0 L242.4 8.6ZM238.1 5.8 L244.6 10.0 L243.2 12.2 L236.6 8.0ZM236.6 8.0 L243.2 12.2 L241.8 14.4 L235.2 10.1ZM235.2 10.1 L241.8 14.4 L240.3 16.6 L233.8 12.3ZM233.8 12.3 L236.0 13.7 L231.7 20.3 L229.6 18.9ZM236.0 13.7 L238.2 15.2 L233.9 21.7 L231.7 20.3ZM238.2 15.2 L240.3 16.6 L236.1 23.1 L233.9 21.7ZM229.6 18.9 L236.1 23.1 L234.7 25.3 L228.1 21.1ZM253.1 -3.0 L255.3 -1.6 L251.0 4.9 L248.8 3.5ZM255.3 -1.6 L257.5 -0.2 L253.2 6.3 L251.0 4.9ZM248.8 3.5 L255.4 7.7 L254.0 9.9 L247.4 5.7ZM247.4 5.7 L254.0 9.9 L252.6 12.1 L246.0 7.9ZM246.0 7.9 L252.6 12.1 L251.1 14.3 L244.6 10.0ZM244.6 10.0 L246.8 11.5 L242.5 18.0 L240.3 16.6ZM246.8 11.5 L249.0 12.9 L244.7 19.4 L242.5 18.0ZM249.0 12.9 L251.1 14.3 L246.9 20.8 L244.7 19.4ZM240.3 16.6 L246.9 20.8 L245.5 23.0 L238.9 18.8ZM238.9 18.8 L245.5 23.0 L244.1 25.2 L237.5 20.9ZM255.4 7.7 L257.6 9.2 L253.3 15.7 L251.1 14.3ZM251.1 14.3 L257.7 18.5 L256.3 20.7 L249.7 16.5ZM249.7 16.5 L256.3 20.7 L254.8 22.9 L248.3 18.6ZM248.3 18.6 L254.8 22.9 L253.4 25.1 L246.9 20.8Z" fill="none" stroke-width=".55"/></symbol></defs></svg>
<div class="a" style="left:1210px;top:-1px;width:80px;height:26px;border-radius:4px 0 0 4px;border:1px solid #7a5a16;border-top:2px solid #d8aa10;background:linear-gradient(#3a1e1e 0,#442020 55%,#6c2424 100%);box-shadow:0 1px 2px #000"></div>
<svg style="left:1220.500px;top:9.500px" width="7.500" height="6.500" viewBox="0 0 7.500 6.500"><path d="M0 0 H7.500 L3.750 6.500 Z" fill="#fbf6e0"/></svg>
<div class="t b" style="left:1235px;top:5.500px;font-size:10.800px;line-height:14px;color:#e6be1c">Tool</div>
<div class="gb" style="left:1210.5px;top:28px;width:26.5px;height:25.5px"></div>
<div class="gb" style="left:1239.5px;top:28px;width:26.5px;height:25.5px"></div>
<div class="gb" style="left:1268.5px;top:28px;width:26.5px;height:25.5px"></div>
<div class="gb" style="left:1210.5px;top:57px;width:26.5px;height:25.5px"></div>
<div class="gb" style="left:1239.5px;top:57px;width:26.5px;height:25.5px"></div>
<div class="gb" style="left:1268.5px;top:57px;width:26.5px;height:25.5px"></div>
<svg style="left:1214px;top:32.500px" width="20" height="18" viewBox="0 0 20 18"><g stroke="#14345c" stroke-linecap="round"><path d="M4 1.500 L15 12.500" stroke-width="2.700"/><path d="M16 1.500 L5 12.500" stroke-width="2.700"/><path d="M11.200 14.300 L17 8.800" stroke-width="2.300"/><path d="M8.800 14.300 L3 8.800" stroke-width="2.300"/><path d="M15 12.500 L17.300 14.800 M5 12.500 L2.700 14.800" stroke-width="2.900"/></g></svg>
<svg style="left:1242.500px;top:31px" width="21" height="20" viewBox="0 0 21 20"><g fill="#14345c"><ellipse cx="4.800" cy="6.500" rx="2.900" ry="3.300"/><ellipse cx="16.200" cy="6.500" rx="2.900" ry="3.300"/><path d="M.3 15.500 Q.2 10 4.500 9.600 L7 9.600 Q4 13 4.300 16.500 Z"/><path d="M20.700 15.500 Q20.800 10 16.500 9.600 L14 9.600 Q17 13 16.700 16.500 Z"/><ellipse cx="10.500" cy="5.800" rx="3.900" ry="4.500" stroke="#f8eab8" stroke-width=".9"/><path d="M4.800 17 Q4.300 10.300 8.500 9.700 L12.500 9.700 Q16.700 10.300 16.200 17 Q15.500 19.800 10.500 19.800 Q5.500 19.800 4.800 17 Z" stroke="#f8eab8" stroke-width=".9"/><rect x="8.300" y="8" width="4.400" height="3.500"/></g></svg>
<svg style="left:1272px;top:32px" width="10" height="18" viewBox="0 0 10 18"><rect x="1" y="2.500" width="12" height="14.500" fill="none" stroke="#14345c" stroke-width="2"/><rect x="4" y="0" width="6" height="4" fill="#14345c"/><path d="M4 8 H10 M4 11 H10 M4 14 H10" stroke="#14345c" stroke-width="1.200"/></svg>
<svg style="left:1214px;top:59.500px" width="20" height="20" viewBox="0 0 20 20"><g stroke="#14345c" stroke-linecap="butt"><path d="M2.500 7 H10.500 M6.500 3 V11" stroke-width="2.600"/><path d="M16.500 2 L9 16" stroke-width="3"/></g></svg>
<svg style="left:1243px;top:59.500px" width="20" height="21" viewBox="0 0 20 21"><g fill="#14345c"><ellipse cx="10" cy="5.300" rx="3.300" ry="4.200"/><rect x="8" y="7.500" width="4" height="4"/><path d="M4.300 17 Q3.800 10.800 8 10.200 L12 10.200 Q16.200 10.800 15.700 17 Q15 20.300 10 20.300 Q5 20.300 4.300 17 Z"/><path d="M3 4 l.8 1.700 1.700.8 -1.700.8 -.8 1.700 -.8-1.700 -1.700-.8 1.700-.8z"/><path d="M16.500 .5 l.7 1.500 1.500.7 -1.500.7 -.7 1.500 -.7-1.500 -1.500-.7 1.500-.7z"/><path d="M18 7.500 l.6 1.200 1.200.6 -1.200.6 -.6 1.200 -.6-1.200 -1.200-.6 1.200-.6z"/></g></svg>
<svg style="left:1272px;top:61px" width="10" height="18" viewBox="0 0 10 18"><path d="M5.500 1 V12" stroke="#14345c" stroke-width="1.800"/><path d="M5.500 1 Q9 2 10 5" stroke="#14345c" stroke-width="1.800" fill="none"/><ellipse cx="3.500" cy="12.500" rx="3" ry="2.300" fill="#14345c"/></svg>
<div class="a" style="left:1238px;top:113px;width:44px;height:489px;background:#140806"></div>
<div class="sb hd" style="top:114.2px"><div class="t">brary</div></div>
<div class="sb" style="top:142.9px"><div class="t">Module</div></div>
<div class="sb" style="top:171.5px"><div class="t">Assets</div></div>
<div class="sb" style="top:200.2px"><div class="t">Sound</div></div>
<div class="sb hd" style="top:228.8px"><div class="t">ayer</div></div>
<div class="sb" style="top:257.5px"><div class="t">Charac</div></div>
<div class="sb" style="top:286.2px"><div class="t">Notes</div></div>
<div class="sb hd" style="top:314.8px"><div class="t">ampaign</div></div>
<div class="sb" style="top:343.5px"><div class="t">Encoun</div></div>
<div class="sb" style="top:372.1px"><div class="t">Images</div></div>
<div class="sb" style="top:400.8px"><div class="t">Items</div></div>
<div class="sb" style="top:429.5px"><div class="t">NPCs</div></div>
<div class="sb" style="top:458.1px"><div class="t">Parcels</div></div>
<div class="sb" style="top:486.8px"><div class="t">Quests</div></div>
<div class="sb" style="top:515.4px"><div class="t">Story</div></div>
<div class="sb" style="top:544.1px"><div class="t">Tables</div></div>
<div class="sb" style="top:572.8px"><div class="t">Vehicle</div></div>
<div class="gb" style="left:1211px;top:516.5px;width:26.5px;height:25.5px"></div>
<div class="gb" style="left:1211px;top:545px;width:26.5px;height:25.5px"></div>
<div class="gb" style="left:1211px;top:574px;width:26.5px;height:25.5px"></div>
<svg style="left:1216px;top:533px" width="17" height="6" viewBox="0 0 17 6"><rect x="1" y="0" width="15" height="4.500" fill="none" stroke="#14345c" stroke-width="1.400"/></svg>
<svg style="left:1213.500px;top:548px" width="22" height="20" viewBox="0 0 22 20"><g><rect x="1" y="1.500" width="10" height="10" rx="1.500" fill="#14345c" transform="rotate(-18 6 6.500)"/><rect x="10" y="7" width="10" height="10" rx="1.500" fill="#14345c" transform="rotate(22 15 12)"/><g fill="#f6e8b0"><circle cx="4.500" cy="4.500" r="1"/><circle cx="8" cy="8.500" r="1"/><circle cx="6" cy="6.500" r="1"/><circle cx="13" cy="10.500" r="1"/><circle cx="17.500" cy="13.500" r="1"/><circle cx="15" cy="12" r="1"/></g></g></svg>
<svg style="left:1214px;top:577px" width="21" height="20" viewBox="0 0 21 20"><g fill="#14345c"><path d="M11 0 L11 14 L1 14 Z"/><path d="M12.500 3 L12.500 14 L19.500 14 Z"/><path d="M1 15.500 H20.500 L17 19.500 H4 Z"/></g></svg>
<div class="a" style="left:1210px;top:602.500px;width:80px;height:25.500px;border-radius:4px 0 0 4px;border:1px solid #7a5a16;background:linear-gradient(#3a1e1e 0,#442020 55%,#6c2424 100%);box-shadow:0 1px 2px #000"></div>
<svg style="left:1221px;top:611px" width="7" height="8" viewBox="0 0 7 8"><path d="M0 0 L7 4 L0 8 Z" fill="#fbf6e0"/></svg>
<div class="t b" style="left:1235px;top:608.500px;font-size:10.800px;line-height:14px;color:#e6be1c">Character</div>
<div class="gb" style="left:1211px;top:672px;width:27px;height:26.5px"></div>
<svg style="left:1218px;top:678px" width="14" height="15" viewBox="0 0 14 15"><path d="M0 0 L14 7.500 L0 15 Z" fill="#14345c"/></svg>
<svg style="left:357px;top:40px" width="502" height="494"><defs><filter id="lth357" x="0" y="0" width="100%" height="100%"><feTurbulence type="fractalNoise" baseFrequency=".42 .5" numOctaves="2" seed="7"/><feColorMatrix values="0 0 0 0 .05  0 0 0 0 .03  0 0 0 0 .02  3.200 0 0 0 -1.150"/></filter></defs><path d="M0 0 H502 V494 H0 Z M10 10 V484 H492 V10 Z" fill="#34261d" fill-rule="evenodd"/><path d="M0 0 H502 V494 H0 Z M10 10 V484 H492 V10 Z" fill="#000" fill-rule="evenodd" filter="url(#lth357)"/><path d="M0 .6 H502" stroke="#6a4430" stroke-width="1.200" opacity=".9"/></svg>
<div class="a" style="left:367px;top:50px;width:482px;height:480px;background:linear-gradient(to right,#e6e6ee 0,#d2d2e2 4px,#f2f2f2 7px,#dcdce8 10px,#f0f0ee 14px,#f0f0ee 468px,#dcdce8 472px,#f2f2f2 476px,#d2d2e2 479px,#e6e6ee 482px)"></div>
<div class="a" style="left:381px;top:50px;width:460px;height:30px;background:linear-gradient(#e8ead2 0,#ecebd8 10px,#e2e4cc 20px)"></div>
<div class="a" style="left:382px;top:90px;width:450px;height:430px;border:1.500px solid #d0853c;background:#d9d9c0"></div>
<div class="ob" style="left:825.500px;top:39.500px;width:16px;height:16.500px"></div>
<div class="t b" style="left:825.500px;top:40.500px;width:16px;text-align:center;font-size:13.500px;line-height:15px;color:#14345c">?</div>
<div class="ob" style="left:843px;top:39.500px;width:16px;height:16.500px"></div>
<svg style="left:846px;top:43px" width="10" height="10" viewBox="0 0 10 10"><path d="M1 1 L9 9 M9 1 L1 9" stroke="#14345c" stroke-width="2.600"/></svg>
<svg style="left:562px;top:40.5px" width="95" height="28.5" viewBox="0 0 95 28.5"><path d="M0 .5 L95 .5 L90.5 22.5 Q90 25.5 87 25.5 L8 25.5 Q5 25.5 4.500 22.5 Z" fill="#120806" transform="translate(0,2)" opacity=".8"/><path d="M0 .5 L95 .5 L90.5 22.5 Q90 25.5 87 25.5 L8 25.5 Q5 25.5 4.500 22.5 Z" fill="#642222" stroke="#7a5a44" stroke-width=".8"/><path d="M0 .5 L95 .5" stroke="#e0b010" stroke-width="1.200"/><path d="M.5 1 L5 22.5" stroke="#9a7a2a" stroke-width=".8" fill="none"/><path d="M94.5 1 L90 22.5" stroke="#9a7a2a" stroke-width=".8" fill="none"/></svg>
<div class="t tab" style="left:585.5px;top:46.2px;font-size:11.3px;line-height:14px;transform:scaleX(0.975);transform-origin:0 0">M<span style="font-size:9.4px">ODULES</span></div>
<div class="win" style="left:321.2px;top:368px;">
<div class="a" style="left:0;top:6px;width:250px;height:235px;background:linear-gradient(#f4f4ee 0,#ecece4 30px,#e9e9e1 120px,#efefe8 235px)"></div>
<svg style="left:0;top:6px;overflow:hidden" width="250" height="18"><rect width="250" height="18" fill="#fbfbf9"/><use href="#hb" width="250" height="18" stroke="#808080"/></svg><div class="a" style="left:0;top:6px;width:250px;height:18px;background:linear-gradient(rgba(240,240,234,0) 0,rgba(240,240,234,.15) 8px,rgba(240,240,234,.75) 13px,#f0f0ea 18px)"></div>
<svg style="left:0;top:226px;overflow:hidden" width="250" height="15" viewBox="0 3 250 15"><rect y="3" width="250" height="15" fill="#f8f4f0"/><use href="#hb" width="250" height="18" stroke="#cc5246"/></svg><div class="a" style="left:0;top:226px;width:250px;height:15px;background:linear-gradient(#efefe8 0,rgba(239,239,232,.8) 4px,rgba(239,239,232,.2) 9px,rgba(239,239,232,0) 15px)"></div>
<div class="edgeL"></div><div class="edgeR"></div>
<div class="a" style="left:6.500px;top:6px;width:1px;height:234px;background:#dcdce4"></div><div class="a" style="right:6.500px;top:6px;width:1px;height:234px;background:#dcdce4"></div>
<div class="top"></div><div class="bot"></div>
<svg style="left:238px;top:240px" width="12" height="10" viewBox="0 0 12 10"><path d="M12 0 L12 10 L0 10 Z" fill="#c8861c"/><path d="M12 3.500 L4 10 M12 6.500 L8 10" stroke="#8a5a10" stroke-width=".9"/></svg>
<svg style="left:15px;top:24.5px" width="12" height="12" viewBox="0 0 12 12"><rect x=".3" y=".3" width="11.400" height="11.400" rx="1.600" fill="#a30d18" stroke="#8a0a12" stroke-width=".6"/><circle cx="6.100" cy="5.900" r="4.100" fill="#f7f1f0"/><path d="M6.800 2.300 C4.500 3.400 4.200 5.300 5.600 6.500 C6.800 7.500 6.300 8.900 4.900 9.400" fill="none" stroke="#98101a" stroke-width="1.250" stroke-linecap="round"/><path d="M7.900 4.200 C8.500 5.200 8.300 6.500 7.400 7.400" fill="none" stroke="#c05a60" stroke-width=".9" stroke-linecap="round"/><path d="M2.600 8.600 Q3.600 10.400 6 10.300" fill="none" stroke="#f0c8c8" stroke-width=".6"/></svg>
<div class="name"><div class="t">Detect Weaponry</div></div>
<div class="rb" style="left:206.700px;top:22px;width:17.300px;height:17.500px"></div>
<svg style="left:210.500px;top:26.500px" width="10" height="8" viewBox="0 0 10 8"><rect x=".5" y=".5" width="9" height="7" fill="#b8c8b8" stroke="#2a3a4a"/><path d="M2 2.500 H8 M2 4.500 H6.500" stroke="#2a3a4a" stroke-width=".9"/></svg>
<svg style="left:228.500px;top:25px" width="9" height="12" viewBox="0 0 9 12"><path d="M2.500 5.500 V3.200 Q2.500 1 4.500 1 Q6.500 1 6.500 3.200 V5.500" fill="none" stroke="#c8a8a8" stroke-width="1.300"/><circle cx="4.500" cy="7.800" r="3.700" fill="#6e141c"/><circle cx="4.500" cy="7.800" r="1" fill="#8a3038"/></svg>
<div class="gb" style="left:236px;top:1px;width:13.500px;height:14px;border-radius:3px"></div>
<svg style="left:239px;top:4.200px" width="7.500" height="7.500" viewBox="0 0 8 8"><path d="M.5 .5 L7.500 7.500 M7.500 .5 L.5 7.500" stroke="#14345c" stroke-width="1.700"/></svg>
<div class="t lab">Spell</div>
<div class="body">
<div class="t h">Level 1 divination</div><div class="hr"></div>
<div class="t k" style="top:36.1px">Casting Time</div><div class="t v" style="top:36.1px">1 action</div>
<div class="t k" style="top:55.5px">Range</div><div class="t v" style="top:55.5px">Self</div>
<div class="t k" style="top:74.8px">Components</div><div class="t v" style="top:74.8px">V S</div>
<div class="t k" style="top:94.2px">Duration</div><div class="t v" style="top:94.2px">Concentration, up to 10 minutes</div>
<div class="p">For the duration, you sense the presence of<br>manufactured weapons within 30 feet of you.<br>Improvised weapons are only detected if they<br>are being actively wielded with intent to use<br>them as a weapon. If you sense weapons in this</div>
<div class="sbl" style="left:214.500px;top:10px;height:160px"></div>
<svg style="left:212.25px;top:2.25px" width="5.500" height="7.500" viewBox="0 0 7 9"><path d="M3.500 0 L6.500 4 L.500 4 Z" fill="#dc8a5c"/><path d="M3.500 3 L6.500 7.500 L.500 7.500 Z" fill="#6a84b4"/></svg>
<svg style="left:212.25px;top:162.75px" width="5.500" height="7.500" viewBox="0 0 7 9"><path d="M3.500 6 L6.500 1.500 L.500 1.500 Z" fill="#6a84b4"/><path d="M3.500 9 L6.500 5 L.500 5 Z" fill="#dc8a5c"/></svg>
</div></div>
<div class="a" style="left:526px;top:70px;width:716.500px;height:463px;box-shadow:0 2px 5px rgba(0,0,0,.7)"></div>
<svg style="left:526px;top:69.5px" width="716.5" height="463.5"><defs><filter id="lth526" x="0" y="0" width="100%" height="100%"><feTurbulence type="fractalNoise" baseFrequency=".42 .5" numOctaves="2" seed="7"/><feColorMatrix values="0 0 0 0 .05  0 0 0 0 .03  0 0 0 0 .02  3.200 0 0 0 -1.150"/></filter></defs><path d="M0 0 H716.5 V463.5 H0 Z M10 10 V453.5 H706.5 V10 Z" fill="#34261d" fill-rule="evenodd"/><path d="M0 0 H716.5 V463.5 H0 Z M10 10 V453.5 H706.5 V10 Z" fill="#000" fill-rule="evenodd" filter="url(#lth526)"/><path d="M0 .6 H716.5" stroke="#6a4430" stroke-width="1.200" opacity=".9"/></svg>
<div class="a" style="left:536px;top:79px;width:696px;height:445.500px;background:linear-gradient(#e2e4d2 0,#e6e7d6 12px,#e1e2d8 30px,#dddcd6 60px,#dcdcd6 400px,#e4e4d8 420px,#eaead8 445px)"></div>
<div class="a" style="left:551px;top:79px;width:668px;height:26px;background:linear-gradient(to right,rgba(236,238,204,.55) 0,rgba(228,228,226,.5) 12%,rgba(240,240,206,.6) 28%,rgba(226,226,224,.5) 42%,rgba(238,238,200,.65) 58%,rgba(228,228,226,.5) 72%,rgba(238,238,206,.55) 86%,rgba(226,226,224,.5) 100%)"></div>
<div class="a" style="left:536px;top:79px;width:15px;height:445.500px;background:linear-gradient(to right,#ececec 0,#e6e6ea 3px,#c6c6dc 4.500px,#d6d6e6 6px,#f0f0f0 8px,#e4e4ea 11px,#e8e8e4 15px)"></div>
<div class="a" style="left:1218.500px;top:79px;width:13.500px;height:445.500px;background:linear-gradient(to left,#ececec 0,#e6e6ea 3px,#c6c6dc 4.500px,#d6d6e6 6px,#f0f0f0 8px,#e4e4ea 11px,#e4e4dc 13.500px)"></div>
<div class="frm" style="left:550.500px;top:104.500px;width:258.500px;height:381px;background:#d8d8be;box-shadow:inset 0 0 0 1px #d4dcc8"></div>
<div class="a" style="left:553px;top:115.500px;width:249px;height:28px;border:1px solid #5a5a5a;border-radius:3px;background:#fdf6dc"></div>
<div class="t b" style="left:565.500px;top:120.900px;font-family:'Liberation Serif',serif;font-size:11.600px;line-height:16px;color:#4a3c30;transform:scaleX(1.070);transform-origin:0 0">Breath of Life - The Archivist (5E)</div>
<div class="a" style="left:565px;top:143.500px;width:237px;height:108.500px;background:#d3b792"></div>
<div class="t b" style="left:572.500px;top:147.3px;font-family:'Liberation Serif',serif;font-size:10.700px;line-height:16px;color:#4a3c30;transform:scaleX(1.110);transform-origin:0 0">Introduction</div>
<div class="t b" style="left:572.500px;top:168.7px;font-family:'Liberation Serif',serif;font-size:10.700px;line-height:16px;color:#4a3c30;transform:scaleX(1.110);transform-origin:0 0">The Archivist</div>
<div class="t b" style="left:572.500px;top:190.1px;font-family:'Liberation Serif',serif;font-size:10.700px;line-height:16px;color:#4a3c30;transform:scaleX(1.110);transform-origin:0 0">Other Class Options</div>
<div class="t b" style="left:572.500px;top:211.6px;font-family:'Liberation Serif',serif;font-size:10.700px;line-height:16px;color:#4a3c30;transform:scaleX(1.110);transform-origin:0 0">New Feats</div>
<div class="t b" style="left:572.500px;top:233.0px;font-family:'Liberation Serif',serif;font-size:10.700px;line-height:16px;color:#4a3c30;transform:scaleX(1.110);transform-origin:0 0">New Spells</div>
<div class="t" style="left:578.500px;top:253px;font-size:9px;color:#36342e">New Spells</div>
<div class="a" style="left:565px;top:267.500px;width:237px;height:108px;background:#d3b792"></div>
<div class="t b" style="left:572.500px;top:270.7px;font-family:'Liberation Serif',serif;font-size:10.700px;line-height:16px;color:#4a3c30;transform:scaleX(1.110);transform-origin:0 0">Spellbook Modifications</div>
<div class="t b" style="left:572.500px;top:292.2px;font-family:'Liberation Serif',serif;font-size:10.700px;line-height:16px;color:#4a3c30;transform:scaleX(1.110);transform-origin:0 0">New Magic Items</div>
<div class="t b" style="left:572.500px;top:313.7px;font-family:'Liberation Serif',serif;font-size:10.700px;line-height:16px;color:#4a3c30;transform:scaleX(1.110);transform-origin:0 0">New Creatures</div>
<div class="t b" style="left:572.500px;top:335.2px;font-family:'Liberation Serif',serif;font-size:10.700px;line-height:16px;color:#4a3c30;transform:scaleX(1.110);transform-origin:0 0">Optional Rules</div>
<div class="t b" style="left:572.500px;top:356.7px;font-family:'Liberation Serif',serif;font-size:10.700px;line-height:16px;color:#4a3c30;transform:scaleX(1.110);transform-origin:0 0">Sample NPC</div>
<svg style="left:812.500px;top:111.500px" width="15" height="22" viewBox="0 0 15 22"><defs><linearGradient id="ar" x1="0" y1="0" x2="0" y2="1"><stop offset="0" stop-color="#a07840"/><stop offset=".5" stop-color="#7a5628"/><stop offset="1" stop-color="#5a3c18"/></linearGradient></defs><path d="M14.500 .5 L14.500 21.500 L.5 11 Z" fill="url(#ar)" stroke="#5a4020" stroke-width=".6"/></svg>
<div class="frm" style="left:830.500px;top:104.500px;width:388px;height:381px;background:#d6d6bb;box-shadow:inset 0 0 0 1px #dfe3cf;overflow:hidden">
<svg style="left:7.899999999999977px;top:9.5px" width="12.5" height="12.5" viewBox="0 0 12 12"><rect x=".3" y=".3" width="11.400" height="11.400" rx="1.600" fill="#a30d18" stroke="#8a0a12" stroke-width=".6"/><circle cx="6.100" cy="5.900" r="4.100" fill="#f7f1f0"/><path d="M6.800 2.300 C4.500 3.400 4.200 5.300 5.600 6.500 C6.800 7.500 6.300 8.900 4.900 9.400" fill="none" stroke="#98101a" stroke-width="1.250" stroke-linecap="round"/><path d="M7.900 4.200 C8.500 5.200 8.300 6.500 7.400 7.400" fill="none" stroke="#c05a60" stroke-width=".9" stroke-linecap="round"/><path d="M2.600 8.600 Q3.600 10.400 6 10.300" fill="none" stroke="#f0c8c8" stroke-width=".6"/></svg>
<div class="t b" style="left:29.2px;top:10.8px;font-size:10.300px;line-height:13px;color:#1c1a16">New Spells</div>
<div class="t b" style="left:19.5px;top:26.3px;font-size:13.200px;line-height:17px;color:#7a1216">New Spells</div>
<svg style="left:24.299999999999955px;top:52.499999999999986px" width="12" height="12" viewBox="0 0 12 12"><rect x=".3" y=".3" width="11.400" height="11.400" rx="1.600" fill="#a30d18" stroke="#8a0a12" stroke-width=".6"/><circle cx="6.100" cy="5.900" r="4.100" fill="#f7f1f0"/><path d="M6.800 2.300 C4.500 3.400 4.200 5.300 5.600 6.500 C6.800 7.500 6.300 8.900 4.900 9.400" fill="none" stroke="#98101a" stroke-width="1.250" stroke-linecap="round"/><path d="M7.900 4.200 C8.500 5.200 8.300 6.500 7.400 7.400" fill="none" stroke="#c05a60" stroke-width=".9" stroke-linecap="round"/><path d="M2.600 8.600 Q3.600 10.400 6 10.300" fill="none" stroke="#f0c8c8" stroke-width=".6"/></svg>
<div class="t b" style="left:41.0px;top:52.8px;font-size:9px;color:#1c1a16">Aberrant Form</div>
<div class="t i" style="left:19.5px;top:72.5px;font-size:8.600px;color:#2e2c26">1st level transmutation (Sorcerer, Wizard)</div>
<div class="t " style="left:19.5px;top:90.8px;font-size:9.100px;color:#3a382f"><b style="color:#1c1a16">Casting Time</b> 1 action</div>
<div class="t " style="left:19.5px;top:109.3px;font-size:9.100px;color:#3a382f"><b style="color:#1c1a16">Range</b> Touch</div>
<div class="t " style="left:19.5px;top:128.3px;font-size:9.100px;color:#3a382f"><b style="color:#1c1a16">Components</b> V S</div>
<div class="t " style="left:19.5px;top:146.3px;font-size:9.100px;color:#3a382f"><b style="color:#1c1a16">Duration</b> 1 hour</div>
<div class="t" style="left:19.5px;top:166.3px;font-size:9.050px;line-height:11.500px;color:#2e2c26">The caster transforms one creature into an aberration. Its form shifts into a<br>hideous mockery of its natural state. The creature&#x27;s type changes to aberration,<br>and it gains a +2 bonus to its AC as its form changes, developing some form of<br>natural armor. While the spell persists the target has disadvantage on Persuasion<br>checks but gains a +2 bonus on Intimidation checks. The exact nature of the<br>horrendous change is up to the caster.</div>
<div class="t" style="left:19.5px;top:241.8px;font-size:8.850px;line-height:11.500px;color:#2e2c26"><i>At Higher Levels.</i> When you cast this spell using a spell slot of 2nd level or higher,<br>the bonus to AC and Intimidate increase by 1 for each spell-level slot higher than<br>1st.</div>
<svg style="left:23.5px;top:284.40000000000003px" width="12" height="12" viewBox="0 0 12 12"><rect x=".3" y=".3" width="11.400" height="11.400" rx="1.600" fill="#a30d18" stroke="#8a0a12" stroke-width=".6"/><circle cx="6.100" cy="5.900" r="4.100" fill="#f7f1f0"/><path d="M6.800 2.300 C4.500 3.400 4.200 5.300 5.600 6.500 C6.800 7.500 6.300 8.900 4.900 9.400" fill="none" stroke="#98101a" stroke-width="1.250" stroke-linecap="round"/><path d="M7.900 4.200 C8.500 5.200 8.300 6.500 7.400 7.400" fill="none" stroke="#c05a60" stroke-width=".9" stroke-linecap="round"/><path d="M2.600 8.600 Q3.600 10.400 6 10.300" fill="none" stroke="#f0c8c8" stroke-width=".6"/></svg>
<div class="t b" style="left:41.0px;top:284.4px;font-size:9px;color:#1c1a16">Absorb Mind</div>
<div class="t i" style="left:19.5px;top:304.8px;font-size:8.600px;color:#2e2c26">3rd level divination (Cleric, Sorcerer, Warlock, Wizard)</div>
<div class="t " style="left:19.5px;top:323.6px;font-size:9.100px;color:#3a382f"><b style="color:#1c1a16">Casting Time</b> 1 action</div>
<div class="t " style="left:19.5px;top:342.4px;font-size:9.100px;color:#3a382f"><b style="color:#1c1a16">Range</b> Self/Touch</div>
<div class="t " style="left:33.5px;top:361.3px;font-size:9.100px;color:#3a382f"><b style="color:#1c1a16">Components</b> V S M (a piece of a dead creature's flesh that is consumed while</div>
<div class="sbl" style="left:372.500px;top:40px;height:330px"></div>
<svg style="left:370.25px;top:26.75px" width="5.500" height="7.500" viewBox="0 0 7 9"><path d="M3.500 0 L6.500 4 L.500 4 Z" fill="#dc8a5c"/><path d="M3.500 3 L6.500 7.500 L.500 7.500 Z" fill="#6a84b4"/></svg>
<svg style="left:370.25px;top:364.75px" width="5.500" height="7.500" viewBox="0 0 7 9"><path d="M3.500 6 L6.500 1.500 L.500 1.500 Z" fill="#6a84b4"/><path d="M3.500 9 L6.500 5 L.500 5 Z" fill="#dc8a5c"/></svg>
<div class="sbt" style="left:370px;top:34px;height:14.500px"></div>
<div class="rb" style="left:358px;top:7px;width:18px;height:17.500px"></div>
<svg style="left:362.500px;top:11px" width="9" height="9" viewBox="0 0 9 9"><path d="M2.500 .5 H8.500 V6.500 H2.500 Z M.5 2.500 V8.500 H6.500" fill="none" stroke="#8a8a7a" stroke-width="1"/></svg>
</div>
<div class="rb" style="left:552.5px;top:494px;width:18px;height:17.500px"></div>
<div class="a" style="left:557.0px;top:501.2px;width:9px;height:3px;background:#14345c;border-radius:.5px"></div>
<div class="a" style="left:560.0px;top:498.2px;width:3px;height:9px;background:#14345c;border-radius:.5px"></div>
<div class="rb" style="left:574px;top:494px;width:18px;height:17.500px"></div>
<div class="a" style="left:578.5px;top:501.2px;width:9px;height:3px;background:#14345c;border-radius:.5px"></div>
<svg style="left:593px;top:492px" width="11" height="22" viewBox="0 0 11 22"><ellipse cx="4" cy="5.500" rx="2.800" ry="4.500" fill="none" stroke="#c8a432" stroke-width="1.300" transform="rotate(-15 4 5.500)"/><path d="M5.500 9.500 L9 19.500" stroke="#b89030" stroke-width="1.300"/></svg>
<div class="a" style="left:603.500px;top:494px;width:200px;height:17.500px;border-radius:6px;background:#d6d6bc;border:1px solid #1a2060"></div>
<div class="a" style="left:987px;top:495.500px;width:14.500px;height:14.500px;border-radius:3px;background:#f4ecc8;border:1px solid #c8b88a"></div>
<svg style="left:987px;top:495.500px" width="14.500" height="14.500" viewBox="0 0 14.500 14.500"><path d="M10 3 L10 11.500 L3.500 7.250 Z" fill="#1e4a7a"/></svg>
<div class="a" style="left:1056px;top:495.500px;width:14.500px;height:14.500px;border-radius:3px;background:#f4ecc8;border:1px solid #c8b88a"></div>
<svg style="left:1056px;top:495.500px" width="14.500" height="14.500" viewBox="0 0 14.500 14.500"><path d="M4.500 3 L4.500 11.500 L11 7.250 Z" fill="#1e4a7a"/></svg>
<svg style="left:836px;top:70px" width="96" height="29" viewBox="0 0 96 29"><path d="M0 .5 L96 .5 L91.5 23 Q91 26 88 26 L8 26 Q5 26 4.500 23 Z" fill="#120806" transform="translate(0,2)" opacity=".8"/><path d="M0 .5 L96 .5 L91.5 23 Q91 26 88 26 L8 26 Q5 26 4.500 23 Z" fill="#642222" stroke="#7a5a44" stroke-width=".8"/><path d="M0 .5 L96 .5" stroke="#e0b010" stroke-width="1.200"/><path d="M.5 1 L5 23" stroke="#9a7a2a" stroke-width=".8" fill="none"/><path d="M95.5 1 L91 23" stroke="#9a7a2a" stroke-width=".8" fill="none"/></svg>
<div class="t tab" style="left:856px;top:75.5px;font-size:11.3px;line-height:14px;transform:scaleX(0.945);transform-origin:0 0">R<span style="font-size:9.4px">EFERENCE</span></div>
<div class="ob" style="left:1208.500px;top:69.500px;width:16.500px;height:16px"></div>
<div class="a" style="left:1212px;top:75.500px;width:10px;height:4px;border-radius:1.500px;background:#14345c"></div>
<div class="ob" style="left:1226px;top:69.500px;width:16.500px;height:16px"></div>
<svg style="left:1229px;top:72.500px" width="10" height="10" viewBox="0 0 10 10"><path d="M1 1 L9 9 M9 1 L1 9" stroke="#14345c" stroke-width="2.600"/></svg>
<svg style="left:1230px;top:521px" width="12.500" height="12.500" viewBox="0 0 12.500 12.500"><path d="M12.500 0 L12.500 12.500 L0 12.500 Z" fill="#c8861c"/><path d="M12.500 4 L4 12.500 M12.500 8 L8 12.500" stroke="#8a5a10" stroke-width="1"/></svg>
<div class="win" style="left:311px;top:30px;">
<div class="a" style="left:0;top:6px;width:250px;height:235px;background:linear-gradient(#f4f4ee 0,#ecece4 30px,#e9e9e1 120px,#efefe8 235px)"></div>
<svg style="left:0;top:6px;overflow:hidden" width="250" height="18"><rect width="250" height="18" fill="#fbfbf9"/><use href="#hb" width="250" height="18" stroke="#808080"/></svg><div class="a" style="left:0;top:6px;width:250px;height:18px;background:linear-gradient(rgba(240,240,234,0) 0,rgba(240,240,234,.15) 8px,rgba(240,240,234,.75) 13px,#f0f0ea 18px)"></div>
<svg style="left:0;top:226px;overflow:hidden" width="250" height="15" viewBox="0 3 250 15"><rect y="3" width="250" height="15" fill="#f8f4f0"/><use href="#hb" width="250" height="18" stroke="#cc5246"/></svg><div class="a" style="left:0;top:226px;width:250px;height:15px;background:linear-gradient(#efefe8 0,rgba(239,239,232,.8) 4px,rgba(239,239,232,.2) 9px,rgba(239,239,232,0) 15px)"></div>
<div class="edgeL"></div><div class="edgeR"></div>
<div class="a" style="left:6.500px;top:6px;width:1px;height:234px;background:#dcdce4"></div><div class="a" style="right:6.500px;top:6px;width:1px;height:234px;background:#dcdce4"></div>
<div class="top"></div><div class="bot"></div>
<svg style="left:238px;top:240px" width="12" height="10" viewBox="0 0 12 10"><path d="M12 0 L12 10 L0 10 Z" fill="#c8861c"/><path d="M12 3.500 L4 10 M12 6.500 L8 10" stroke="#8a5a10" stroke-width=".9"/></svg>
<svg style="left:15px;top:24.5px" width="12" height="12" viewBox="0 0 12 12"><rect x=".3" y=".3" width="11.400" height="11.400" rx="1.600" fill="#a30d18" stroke="#8a0a12" stroke-width=".6"/><circle cx="6.100" cy="5.900" r="4.100" fill="#f7f1f0"/><path d="M6.800 2.300 C4.500 3.400 4.200 5.300 5.600 6.500 C6.800 7.500 6.300 8.900 4.900 9.400" fill="none" stroke="#98101a" stroke-width="1.250" stroke-linecap="round"/><path d="M7.900 4.200 C8.500 5.200 8.300 6.500 7.400 7.400" fill="none" stroke="#c05a60" stroke-width=".9" stroke-linecap="round"/><path d="M2.600 8.600 Q3.600 10.400 6 10.300" fill="none" stroke="#f0c8c8" stroke-width=".6"/></svg>
<div class="name"><div class="t">Red in Tooth and Claw</div></div>
<div class="rb" style="left:206.700px;top:22px;width:17.300px;height:17.500px"></div>
<svg style="left:210.500px;top:26.500px" width="10" height="8" viewBox="0 0 10 8"><rect x=".5" y=".5" width="9" height="7" fill="#b8c8b8" stroke="#2a3a4a"/><path d="M2 2.500 H8 M2 4.500 H6.500" stroke="#2a3a4a" stroke-width=".9"/></svg>
<svg style="left:228.500px;top:25px" width="9" height="12" viewBox="0 0 9 12"><path d="M2.500 5.500 V3.200 Q2.500 1 4.500 1 Q6.500 1 6.500 3.200 V5.500" fill="none" stroke="#c8a8a8" stroke-width="1.300"/><circle cx="4.500" cy="7.800" r="3.700" fill="#6e141c"/><circle cx="4.500" cy="7.800" r="1" fill="#8a3038"/></svg>
<div class="gb" style="left:236px;top:1px;width:13.500px;height:14px;border-radius:3px"></div>
<svg style="left:239px;top:4.200px" width="7.500" height="7.500" viewBox="0 0 8 8"><path d="M.5 .5 L7.500 7.500 M7.500 .5 L.5 7.500" stroke="#14345c" stroke-width="1.700"/></svg>
<div class="t lab">Spell</div>
<div class="body">
<div class="t h">Level 2 necromancy</div><div class="hr"></div>
<div class="t k" style="top:36.1px">Casting Time</div><div class="t v" style="top:36.1px">1 action</div>
<div class="t k" style="top:55.5px">Range</div><div class="t v" style="top:55.5px">Self</div>
<div class="t k" style="top:74.8px">Components</div><div class="t v" style="top:74.8px">V S</div>
<div class="t k" style="top:94.2px">Duration</div><div class="t v" style="top:94.2px">1 hour</div>
<div class="p">You complete the incantation and your eyes<br>turn black and your mouth distends and grows<br>jagged , bloody teeth. You gain a 1d4 bite attack<br>that you can attack with as a bonus action if you<br>make another attack during the round or as an</div>
<div class="sbl" style="left:214.500px;top:10px;height:160px"></div>
<svg style="left:212.25px;top:2.25px" width="5.500" height="7.500" viewBox="0 0 7 9"><path d="M3.500 0 L6.500 4 L.500 4 Z" fill="#dc8a5c"/><path d="M3.500 3 L6.500 7.500 L.500 7.500 Z" fill="#6a84b4"/></svg>
<svg style="left:212.25px;top:162.75px" width="5.500" height="7.500" viewBox="0 0 7 9"><path d="M3.500 6 L6.500 1.500 L.500 1.500 Z" fill="#6a84b4"/><path d="M3.500 9 L6.500 5 L.500 5 Z" fill="#dc8a5c"/></svg>
<div class="sbt" style="left:212.200px;top:11.5px;height:73.5px"></div>
</div></div>
<div class="win" style="left:732.9px;top:469px;">
<div class="a" style="left:0;top:6px;width:250px;height:235px;background:linear-gradient(#f4f4ee 0,#ecece4 30px,#e9e9e1 120px,#efefe8 235px)"></div>
<svg style="left:0;top:6px;overflow:hidden" width="250" height="18"><rect width="250" height="18" fill="#fbfbf9"/><use href="#hb" width="250" height="18" stroke="#808080"/></svg><div class="a" style="left:0;top:6px;width:250px;height:18px;background:linear-gradient(rgba(240,240,234,0) 0,rgba(240,240,234,.15) 8px,rgba(240,240,234,.75) 13px,#f0f0ea 18px)"></div>
<svg style="left:0;top:226px;overflow:hidden" width="250" height="15" viewBox="0 3 250 15"><rect y="3" width="250" height="15" fill="#f8f4f0"/><use href="#hb" width="250" height="18" stroke="#cc5246"/></svg><div class="a" style="left:0;top:226px;width:250px;height:15px;background:linear-gradient(#efefe8 0,rgba(239,239,232,.8) 4px,rgba(239,239,232,.2) 9px,rgba(239,239,232,0) 15px)"></div>
<div class="edgeL"></div><div class="edgeR"></div>
<div class="a" style="left:6.500px;top:6px;width:1px;height:234px;background:#dcdce4"></div><div class="a" style="right:6.500px;top:6px;width:1px;height:234px;background:#dcdce4"></div>
<div class="top"></div><div class="bot"></div>
<svg style="left:238px;top:240px" width="12" height="10" viewBox="0 0 12 10"><path d="M12 0 L12 10 L0 10 Z" fill="#c8861c"/><path d="M12 3.500 L4 10 M12 6.500 L8 10" stroke="#8a5a10" stroke-width=".9"/></svg>
<svg style="left:15px;top:24.5px" width="12" height="12" viewBox="0 0 12 12"><rect x=".3" y=".3" width="11.400" height="11.400" rx="1.600" fill="#a30d18" stroke="#8a0a12" stroke-width=".6"/><circle cx="6.100" cy="5.900" r="4.100" fill="#f7f1f0"/><path d="M6.800 2.300 C4.500 3.400 4.200 5.300 5.600 6.500 C6.800 7.500 6.300 8.900 4.900 9.400" fill="none" stroke="#98101a" stroke-width="1.250" stroke-linecap="round"/><path d="M7.900 4.200 C8.500 5.200 8.300 6.500 7.400 7.400" fill="none" stroke="#c05a60" stroke-width=".9" stroke-linecap="round"/><path d="M2.600 8.600 Q3.600 10.400 6 10.300" fill="none" stroke="#f0c8c8" stroke-width=".6"/></svg>
<div class="name"><div class="t">Thought Crystal</div></div>
<div class="rb" style="left:206.700px;top:22px;width:17.300px;height:17.500px"></div>
<svg style="left:210.500px;top:26.500px" width="10" height="8" viewBox="0 0 10 8"><rect x=".5" y=".5" width="9" height="7" fill="#b8c8b8" stroke="#2a3a4a"/><path d="M2 2.500 H8 M2 4.500 H6.500" stroke="#2a3a4a" stroke-width=".9"/></svg>
<svg style="left:228.500px;top:25px" width="9" height="12" viewBox="0 0 9 12"><path d="M2.500 5.500 V3.200 Q2.500 1 4.500 1 Q6.500 1 6.500 3.200 V5.500" fill="none" stroke="#c8a8a8" stroke-width="1.300"/><circle cx="4.500" cy="7.800" r="3.700" fill="#6e141c"/><circle cx="4.500" cy="7.800" r="1" fill="#8a3038"/></svg>
<div class="gb" style="left:236px;top:1px;width:13.500px;height:14px;border-radius:3px"></div>
<svg style="left:239px;top:4.200px" width="7.500" height="7.500" viewBox="0 0 8 8"><path d="M.5 .5 L7.500 7.500 M7.500 .5 L.5 7.500" stroke="#14345c" stroke-width="1.700"/></svg>
<div class="t lab">Spell</div>
<div class="body">
<div class="t h">Level 2 transmutation</div><div class="hr"></div>
<div class="t k" style="top:36.1px">Casting Time</div><div class="t v" style="top:36.1px">1 bonus action</div>
<div class="t k" style="top:55.5px">Range</div><div class="t v" style="top:55.5px">60 ft.</div>
<div class="t k" style="top:74.8px">Components</div><div class="t v" style="top:74.8px">V S</div>
<div class="t k" style="top:94.2px">Duration</div><div class="t v" style="top:94.2px">see text</div>
<div class="p">You cast this spell and focus your mind upon the<br>mind of another. After 3 rounds of<br>concentrating on this spell, a shard of crystal<br>forcibly bursts from the target&#x27;s head. The<br>crystal deals 2d8 piercing damage and 2d12</div>
<div class="sbl" style="left:214.500px;top:10px;height:160px"></div>
<svg style="left:212.25px;top:2.25px" width="5.500" height="7.500" viewBox="0 0 7 9"><path d="M3.500 0 L6.500 4 L.500 4 Z" fill="#dc8a5c"/><path d="M3.500 3 L6.500 7.500 L.500 7.500 Z" fill="#6a84b4"/></svg>
<svg style="left:212.25px;top:162.75px" width="5.500" height="7.500" viewBox="0 0 7 9"><path d="M3.500 6 L6.500 1.500 L.500 1.500 Z" fill="#6a84b4"/><path d="M3.500 9 L6.500 5 L.500 5 Z" fill="#dc8a5c"/></svg>
<div class="sbt" style="left:212.200px;top:11.5px;height:73.5px"></div>
</div></div>
<div class="a" style="left:52px;top:0;width:251px;height:656px;background:#040404;border-left:1px solid #3a3434;border-right:1px solid #4a4648"></div>
<div class="a" style="left:52px;top:656px;width:251px;height:37px;background:linear-gradient(to right,rgba(4,4,4,.97) 0,rgba(4,4,4,.97) 20px,rgba(5,5,4,.88) 22px,rgba(5,5,4,.88) 48px,rgba(3,3,3,.96) 52px,rgba(3,3,3,.97) 100%);border-radius:0 0 0 9px;border-right:1px solid #3a3638"></div>
<svg style="left:128px;top:0" width="100" height="22" viewBox="0 0 100 22"><path d="M2 0 L97 0 L92.500 17.500 Q92 19.200 90 19.200 L9 19.200 Q7.300 19.200 6.800 17.500 Z" fill="#5e2222" stroke="#7a5a48" stroke-width=".9"/><path d="M2 0 L6.800 17.500" stroke="#8a6a2a" stroke-width=".8" fill="none"/><path d="M97 0 L92.500 17.500" stroke="#8a6a2a" stroke-width=".8" fill="none"/></svg>
<div class="t tab" style="left:160.500px;top:-1px;font-size:11.300px;line-height:14px;transform:scaleX(.915);transform-origin:0 0">S<span style="font-size:9.400px">PELLS</span></div>
<div class="ob" style="left:269.500px;top:-7px;width:15.500px;height:16.500px"></div>
<div class="a" style="left:272.500px;top:-2px;width:9.500px;height:4px;border-radius:1px;background:#14345c"></div>
<div class="ob" style="left:287px;top:-7px;width:15.500px;height:16.500px"></div>
<svg style="left:289.500px;top:-4px" width="10" height="10" viewBox="0 0 10 10"><path d="M1 0 L9 9 M9 0 L1 9" stroke="#14345c" stroke-width="3"/></svg>
<div class="frm" style="left:67.500px;top:25.500px;width:221px;height:627px;background:#c3c2a8;box-shadow:inset 0 0 0 1.500px #b9c6c0;overflow:hidden">
<div class="a" style="left:3px;top:6.200px;width:215px;height:616.500px;overflow:hidden">
<div class="row" style="top:-3.90px;left:3.500px;width:197px"></div>
<svg style="left:4.75px;top:-1.9px" width="12" height="12" viewBox="0 0 12 12"><rect x=".3" y=".3" width="11.400" height="11.400" rx="1.600" fill="#a30d18" stroke="#8a0a12" stroke-width=".6"/><circle cx="6.100" cy="5.900" r="4.100" fill="#f7f1f0"/><path d="M6.800 2.300 C4.500 3.400 4.200 5.300 5.600 6.500 C6.800 7.500 6.300 8.900 4.900 9.400" fill="none" stroke="#98101a" stroke-width="1.250" stroke-linecap="round"/><path d="M7.900 4.200 C8.500 5.200 8.300 6.500 7.400 7.400" fill="none" stroke="#c05a60" stroke-width=".9" stroke-linecap="round"/><path d="M2.600 8.600 Q3.600 10.400 6 10.300" fill="none" stroke="#f0c8c8" stroke-width=".6"/></svg>
<div class="t" style="left:23.200px;top:-1.70px;font-size:9px;color:#2e2c24">Awaken Undead</div>
<div class="row d" style="top:13.31px;left:3.500px;width:197px"></div>
<svg style="left:4.75px;top:15.31px" width="12" height="12" viewBox="0 0 12 12"><rect x=".3" y=".3" width="11.400" height="11.400" rx="1.600" fill="#a30d18" stroke="#8a0a12" stroke-width=".6"/><circle cx="6.100" cy="5.900" r="4.100" fill="#f7f1f0"/><path d="M6.800 2.300 C4.500 3.400 4.200 5.300 5.600 6.500 C6.800 7.500 6.300 8.900 4.900 9.400" fill="none" stroke="#98101a" stroke-width="1.250" stroke-linecap="round"/><path d="M7.900 4.200 C8.500 5.200 8.300 6.500 7.400 7.400" fill="none" stroke="#c05a60" stroke-width=".9" stroke-linecap="round"/><path d="M2.600 8.600 Q3.600 10.400 6 10.300" fill="none" stroke="#f0c8c8" stroke-width=".6"/></svg>
<div class="t" style="left:23.200px;top:15.51px;font-size:9px;color:#2e2c24">Darklight</div>
<div class="row" style="top:30.52px;left:3.500px;width:197px"></div>
<svg style="left:4.75px;top:32.52px" width="12" height="12" viewBox="0 0 12 12"><rect x=".3" y=".3" width="11.400" height="11.400" rx="1.600" fill="#a30d18" stroke="#8a0a12" stroke-width=".6"/><circle cx="6.100" cy="5.900" r="4.100" fill="#f7f1f0"/><path d="M6.800 2.300 C4.500 3.400 4.200 5.300 5.600 6.500 C6.800 7.500 6.300 8.900 4.900 9.400" fill="none" stroke="#98101a" stroke-width="1.250" stroke-linecap="round"/><path d="M7.900 4.200 C8.500 5.200 8.300 6.500 7.400 7.400" fill="none" stroke="#c05a60" stroke-width=".9" stroke-linecap="round"/><path d="M2.600 8.600 Q3.600 10.400 6 10.300" fill="none" stroke="#f0c8c8" stroke-width=".6"/></svg>
<div class="t" style="left:23.200px;top:32.72px;font-size:9px;color:#2e2c24">Death Ward, Mass</div>
<div class="row d" style="top:47.73px;left:3.500px;width:197px"></div>
<svg style="left:4.75px;top:49.73px" width="12" height="12" viewBox="0 0 12 12"><rect x=".3" y=".3" width="11.400" height="11.400" rx="1.600" fill="#a30d18" stroke="#8a0a12" stroke-width=".6"/><circle cx="6.100" cy="5.900" r="4.100" fill="#f7f1f0"/><path d="M6.800 2.300 C4.500 3.400 4.200 5.300 5.600 6.500 C6.800 7.500 6.300 8.900 4.900 9.400" fill="none" stroke="#98101a" stroke-width="1.250" stroke-linecap="round"/><path d="M7.900 4.200 C8.500 5.200 8.300 6.500 7.400 7.400" fill="none" stroke="#c05a60" stroke-width=".9" stroke-linecap="round"/><path d="M2.600 8.600 Q3.600 10.400 6 10.300" fill="none" stroke="#f0c8c8" stroke-width=".6"/></svg>
<div class="t" style="left:23.200px;top:49.93px;font-size:9px;color:#2e2c24">Despoiling Utterance</div>
<div class="row" style="top:64.94px;left:3.500px;width:197px"></div>
<svg style="left:4.75px;top:66.94px" width="12" height="12" viewBox="0 0 12 12"><rect x=".3" y=".3" width="11.400" height="11.400" rx="1.600" fill="#a30d18" stroke="#8a0a12" stroke-width=".6"/><circle cx="6.100" cy="5.900" r="4.100" fill="#f7f1f0"/><path d="M6.800 2.300 C4.500 3.400 4.200 5.300 5.600 6.500 C6.800 7.500 6.300 8.900 4.900 9.400" fill="none" stroke="#98101a" stroke-width="1.250" stroke-linecap="round"/><path d="M7.900 4.200 C8.500 5.200 8.300 6.500 7.400 7.400" fill="none" stroke="#c05a60" stroke-width=".9" stroke-linecap="round"/><path d="M2.600 8.600 Q3.600 10.400 6 10.300" fill="none" stroke="#f0c8c8" stroke-width=".6"/></svg>
<div class="t" style="left:23.200px;top:67.14px;font-size:9px;color:#2e2c24">Detect Weaponry</div>
<div class="row d" style="top:82.15px;left:3.500px;width:197px"></div>
<svg style="left:4.75px;top:84.15px" width="12" height="12" viewBox="0 0 12 12"><rect x=".3" y=".3" width="11.400" height="11.400" rx="1.600" fill="#a30d18" stroke="#8a0a12" stroke-width=".6"/><circle cx="6.100" cy="5.900" r="4.100" fill="#f7f1f0"/><path d="M6.800 2.300 C4.500 3.400 4.200 5.300 5.600 6.500 C6.800 7.500 6.300 8.900 4.900 9.400" fill="none" stroke="#98101a" stroke-width="1.250" stroke-linecap="round"/><path d="M7.900 4.200 C8.500 5.200 8.300 6.500 7.400 7.400" fill="none" stroke="#c05a60" stroke-width=".9" stroke-linecap="round"/><path d="M2.600 8.600 Q3.600 10.400 6 10.300" fill="none" stroke="#f0c8c8" stroke-width=".6"/></svg>
<div class="t" style="left:23.200px;top:84.35px;font-size:9px;color:#2e2c24">Devilsight</div>
<div class="row" style="top:99.36px;left:3.500px;width:197px"></div>
<svg style="left:4.75px;top:101.36px" width="12" height="12" viewBox="0 0 12 12"><rect x=".3" y=".3" width="11.400" height="11.400" rx="1.600" fill="#a30d18" stroke="#8a0a12" stroke-width=".6"/><circle cx="6.100" cy="5.900" r="4.100" fill="#f7f1f0"/><path d="M6.800 2.300 C4.500 3.400 4.200 5.300 5.600 6.500 C6.800 7.500 6.300 8.900 4.900 9.400" fill="none" stroke="#98101a" stroke-width="1.250" stroke-linecap="round"/><path d="M7.900 4.200 C8.500 5.200 8.300 6.500 7.400 7.400" fill="none" stroke="#c05a60" stroke-width=".9" stroke-linecap="round"/><path d="M2.600 8.600 Q3.600 10.400 6 10.300" fill="none" stroke="#f0c8c8" stroke-width=".6"/></svg>
<div class="t" style="left:23.200px;top:101.56px;font-size:9px;color:#2e2c24">Dimension Door, Sustained</div>
<div class="row d" style="top:116.57px;left:3.500px;width:197px"></div>
<svg style="left:4.75px;top:118.57px" width="12" height="12" viewBox="0 0 12 12"><rect x=".3" y=".3" width="11.400" height="11.400" rx="1.600" fill="#a30d18" stroke="#8a0a12" stroke-width=".6"/><circle cx="6.100" cy="5.900" r="4.100" fill="#f7f1f0"/><path d="M6.800 2.300 C4.500 3.400 4.200 5.300 5.600 6.500 C6.800 7.500 6.300 8.900 4.900 9.400" fill="none" stroke="#98101a" stroke-width="1.250" stroke-linecap="round"/><path d="M7.900 4.200 C8.500 5.200 8.300 6.500 7.400 7.400" fill="none" stroke="#c05a60" stroke-width=".9" stroke-linecap="round"/><path d="M2.600 8.600 Q3.600 10.400 6 10.300" fill="none" stroke="#f0c8c8" stroke-width=".6"/></svg>
<div class="t" style="left:23.200px;top:118.77px;font-size:9px;color:#2e2c24">Disrupting Beam</div>
<div class="row" style="top:133.78px;left:3.500px;width:197px"></div>
<svg style="left:4.75px;top:135.78px" width="12" height="12" viewBox="0 0 12 12"><rect x=".3" y=".3" width="11.400" height="11.400" rx="1.600" fill="#a30d18" stroke="#8a0a12" stroke-width=".6"/><circle cx="6.100" cy="5.900" r="4.100" fill="#f7f1f0"/><path d="M6.800 2.300 C4.500 3.400 4.200 5.300 5.600 6.500 C6.800 7.500 6.300 8.900 4.900 9.400" fill="none" stroke="#98101a" stroke-width="1.250" stroke-linecap="round"/><path d="M7.900 4.200 C8.500 5.200 8.300 6.500 7.400 7.400" fill="none" stroke="#c05a60" stroke-width=".9" stroke-linecap="round"/><path d="M2.600 8.600 Q3.600 10.400 6 10.300" fill="none" stroke="#f0c8c8" stroke-width=".6"/></svg>
<div class="t" style="left:23.200px;top:135.98px;font-size:9px;color:#2e2c24">Disrupting Bolt</div>
<div class="row d" style="top:150.99px;left:3.500px;width:197px"></div>
<svg style="left:4.75px;top:152.99px" width="12" height="12" viewBox="0 0 12 12"><rect x=".3" y=".3" width="11.400" height="11.400" rx="1.600" fill="#a30d18" stroke="#8a0a12" stroke-width=".6"/><circle cx="6.100" cy="5.900" r="4.100" fill="#f7f1f0"/><path d="M6.800 2.300 C4.500 3.400 4.200 5.300 5.600 6.500 C6.800 7.500 6.300 8.900 4.900 9.400" fill="none" stroke="#98101a" stroke-width="1.250" stroke-linecap="round"/><path d="M7.900 4.200 C8.500 5.200 8.300 6.500 7.400 7.400" fill="none" stroke="#c05a60" stroke-width=".9" stroke-linecap="round"/><path d="M2.600 8.600 Q3.600 10.400 6 10.300" fill="none" stroke="#f0c8c8" stroke-width=".6"/></svg>
<div class="t" style="left:23.200px;top:153.19px;font-size:9px;color:#2e2c24">Duelist&#x27;s Spellward</div>
<div class="row" style="top:168.20px;left:3.500px;width:197px"></div>
<svg style="left:4.75px;top:170.2px" width="12" height="12" viewBox="0 0 12 12"><rect x=".3" y=".3" width="11.400" height="11.400" rx="1.600" fill="#a30d18" stroke="#8a0a12" stroke-width=".6"/><circle cx="6.100" cy="5.900" r="4.100" fill="#f7f1f0"/><path d="M6.800 2.300 C4.500 3.400 4.200 5.300 5.600 6.500 C6.800 7.500 6.300 8.900 4.900 9.400" fill="none" stroke="#98101a" stroke-width="1.250" stroke-linecap="round"/><path d="M7.900 4.200 C8.500 5.200 8.300 6.500 7.400 7.400" fill="none" stroke="#c05a60" stroke-width=".9" stroke-linecap="round"/><path d="M2.600 8.600 Q3.600 10.400 6 10.300" fill="none" stroke="#f0c8c8" stroke-width=".6"/></svg>
<div class="t" style="left:23.200px;top:170.40px;font-size:9px;color:#2e2c24">Glimpse Eternity</div>
<div class="row d" style="top:185.41px;left:3.500px;width:197px"></div>
<svg style="left:4.75px;top:187.41px" width="12" height="12" viewBox="0 0 12 12"><rect x=".3" y=".3" width="11.400" height="11.400" rx="1.600" fill="#a30d18" stroke="#8a0a12" stroke-width=".6"/><circle cx="6.100" cy="5.900" r="4.100" fill="#f7f1f0"/><path d="M6.800 2.300 C4.500 3.400 4.200 5.300 5.600 6.500 C6.800 7.500 6.300 8.900 4.900 9.400" fill="none" stroke="#98101a" stroke-width="1.250" stroke-linecap="round"/><path d="M7.900 4.200 C8.500 5.200 8.300 6.500 7.400 7.400" fill="none" stroke="#c05a60" stroke-width=".9" stroke-linecap="round"/><path d="M2.600 8.600 Q3.600 10.400 6 10.300" fill="none" stroke="#f0c8c8" stroke-width=".6"/></svg>
<div class="t" style="left:23.200px;top:187.61px;font-size:9px;color:#2e2c24">Ice Lance</div>
<div class="row" style="top:202.62px;left:3.500px;width:197px"></div>
<svg style="left:4.75px;top:204.62px" width="12" height="12" viewBox="0 0 12 12"><rect x=".3" y=".3" width="11.400" height="11.400" rx="1.600" fill="#a30d18" stroke="#8a0a12" stroke-width=".6"/><circle cx="6.100" cy="5.900" r="4.100" fill="#f7f1f0"/><path d="M6.800 2.300 C4.500 3.400 4.200 5.300 5.600 6.500 C6.800 7.500 6.300 8.900 4.900 9.400" fill="none" stroke="#98101a" stroke-width="1.250" stroke-linecap="round"/><path d="M7.900 4.200 C8.500 5.200 8.300 6.500 7.400 7.400" fill="none" stroke="#c05a60" stroke-width=".9" stroke-linecap="round"/><path d="M2.600 8.600 Q3.600 10.400 6 10.300" fill="none" stroke="#f0c8c8" stroke-width=".6"/></svg>
<div class="t" style="left:23.200px;top:204.82px;font-size:9px;color:#2e2c24">Mage Plate</div>
<div class="row d" style="top:219.83px;left:3.500px;width:197px"></div>
<svg style="left:4.75px;top:221.83px" width="12" height="12" viewBox="0 0 12 12"><rect x=".3" y=".3" width="11.400" height="11.400" rx="1.600" fill="#a30d18" stroke="#8a0a12" stroke-width=".6"/><circle cx="6.100" cy="5.900" r="4.100" fill="#f7f1f0"/><path d="M6.800 2.300 C4.500 3.400 4.200 5.300 5.600 6.500 C6.800 7.500 6.300 8.900 4.900 9.400" fill="none" stroke="#98101a" stroke-width="1.250" stroke-linecap="round"/><path d="M7.900 4.200 C8.500 5.200 8.300 6.500 7.400 7.400" fill="none" stroke="#c05a60" stroke-width=".9" stroke-linecap="round"/><path d="M2.600 8.600 Q3.600 10.400 6 10.300" fill="none" stroke="#f0c8c8" stroke-width=".6"/></svg>
<div class="t" style="left:23.200px;top:222.03px;font-size:9px;color:#2e2c24">Magic Missile Storm</div>
<div class="row" style="top:237.04px;left:3.500px;width:197px"></div>
<svg style="left:4.75px;top:239.04px" width="12" height="12" viewBox="0 0 12 12"><rect x=".3" y=".3" width="11.400" height="11.400" rx="1.600" fill="#a30d18" stroke="#8a0a12" stroke-width=".6"/><circle cx="6.100" cy="5.900" r="4.100" fill="#f7f1f0"/><path d="M6.800 2.300 C4.500 3.400 4.200 5.300 5.600 6.500 C6.800 7.500 6.300 8.900 4.900 9.400" fill="none" stroke="#98101a" stroke-width="1.250" stroke-linecap="round"/><path d="M7.900 4.200 C8.500 5.200 8.300 6.500 7.400 7.400" fill="none" stroke="#c05a60" stroke-width=".9" stroke-linecap="round"/><path d="M2.600 8.600 Q3.600 10.400 6 10.300" fill="none" stroke="#f0c8c8" stroke-width=".6"/></svg>
<div class="t" style="left:23.200px;top:239.24px;font-size:9px;color:#2e2c24">Magical Savant</div>
<div class="row d" style="top:254.25px;left:3.500px;width:197px"></div>
<svg style="left:4.75px;top:256.25px" width="12" height="12" viewBox="0 0 12 12"><rect x=".3" y=".3" width="11.400" height="11.400" rx="1.600" fill="#a30d18" stroke="#8a0a12" stroke-width=".6"/><circle cx="6.100" cy="5.900" r="4.100" fill="#f7f1f0"/><path d="M6.800 2.300 C4.500 3.400 4.200 5.300 5.600 6.500 C6.800 7.500 6.300 8.900 4.900 9.400" fill="none" stroke="#98101a" stroke-width="1.250" stroke-linecap="round"/><path d="M7.900 4.200 C8.500 5.200 8.300 6.500 7.400 7.400" fill="none" stroke="#c05a60" stroke-width=".9" stroke-linecap="round"/><path d="M2.600 8.600 Q3.600 10.400 6 10.300" fill="none" stroke="#f0c8c8" stroke-width=".6"/></svg>
<div class="t" style="left:23.200px;top:256.45px;font-size:9px;color:#2e2c24">Magical Scrutiny</div>
<div class="row" style="top:271.46px;left:3.500px;width:197px"></div>
<svg style="left:4.75px;top:273.46px" width="12" height="12" viewBox="0 0 12 12"><rect x=".3" y=".3" width="11.400" height="11.400" rx="1.600" fill="#a30d18" stroke="#8a0a12" stroke-width=".6"/><circle cx="6.100" cy="5.900" r="4.100" fill="#f7f1f0"/><path d="M6.800 2.300 C4.500 3.400 4.200 5.300 5.600 6.500 C6.800 7.500 6.300 8.900 4.900 9.400" fill="none" stroke="#98101a" stroke-width="1.250" stroke-linecap="round"/><path d="M7.900 4.200 C8.500 5.200 8.300 6.500 7.400 7.400" fill="none" stroke="#c05a60" stroke-width=".9" stroke-linecap="round"/><path d="M2.600 8.600 Q3.600 10.400 6 10.300" fill="none" stroke="#f0c8c8" stroke-width=".6"/></svg>
<div class="t" style="left:23.200px;top:273.66px;font-size:9px;color:#2e2c24">Otherworldly Acuity</div>
<div class="row d" style="top:288.67px;left:3.500px;width:197px"></div>
<svg style="left:4.75px;top:290.67px" width="12" height="12" viewBox="0 0 12 12"><rect x=".3" y=".3" width="11.400" height="11.400" rx="1.600" fill="#a30d18" stroke="#8a0a12" stroke-width=".6"/><circle cx="6.100" cy="5.900" r="4.100" fill="#f7f1f0"/><path d="M6.800 2.300 C4.500 3.400 4.200 5.300 5.600 6.500 C6.800 7.500 6.300 8.900 4.900 9.400" fill="none" stroke="#98101a" stroke-width="1.250" stroke-linecap="round"/><path d="M7.900 4.200 C8.500 5.200 8.300 6.500 7.400 7.400" fill="none" stroke="#c05a60" stroke-width=".9" stroke-linecap="round"/><path d="M2.600 8.600 Q3.600 10.400 6 10.300" fill="none" stroke="#f0c8c8" stroke-width=".6"/></svg>
<div class="t" style="left:23.200px;top:290.87px;font-size:9px;color:#2e2c24">Pact Beyond Death</div>
<div class="row" style="top:305.88px;left:3.500px;width:197px"></div>
<svg style="left:4.75px;top:307.88px" width="12" height="12" viewBox="0 0 12 12"><rect x=".3" y=".3" width="11.400" height="11.400" rx="1.600" fill="#a30d18" stroke="#8a0a12" stroke-width=".6"/><circle cx="6.100" cy="5.900" r="4.100" fill="#f7f1f0"/><path d="M6.800 2.300 C4.500 3.400 4.200 5.300 5.600 6.500 C6.800 7.500 6.300 8.900 4.900 9.400" fill="none" stroke="#98101a" stroke-width="1.250" stroke-linecap="round"/><path d="M7.900 4.200 C8.500 5.200 8.300 6.500 7.400 7.400" fill="none" stroke="#c05a60" stroke-width=".9" stroke-linecap="round"/><path d="M2.600 8.600 Q3.600 10.400 6 10.300" fill="none" stroke="#f0c8c8" stroke-width=".6"/></svg>
<div class="t" style="left:23.200px;top:308.08px;font-size:9px;color:#2e2c24">Prismatic Ray</div>
<div class="row d" style="top:323.09px;left:3.500px;width:197px"></div>
<svg style="left:4.75px;top:325.09px" width="12" height="12" viewBox="0 0 12 12"><rect x=".3" y=".3" width="11.400" height="11.400" rx="1.600" fill="#a30d18" stroke="#8a0a12" stroke-width=".6"/><circle cx="6.100" cy="5.900" r="4.100" fill="#f7f1f0"/><path d="M6.800 2.300 C4.500 3.400 4.200 5.300 5.600 6.500 C6.800 7.500 6.300 8.900 4.900 9.400" fill="none" stroke="#98101a" stroke-width="1.250" stroke-linecap="round"/><path d="M7.900 4.200 C8.500 5.200 8.300 6.500 7.400 7.400" fill="none" stroke="#c05a60" stroke-width=".9" stroke-linecap="round"/><path d="M2.600 8.600 Q3.600 10.400 6 10.300" fill="none" stroke="#f0c8c8" stroke-width=".6"/></svg>
<div class="t" style="left:23.200px;top:325.29px;font-size:9px;color:#2e2c24">Prismatic Weapon</div>
<div class="row" style="top:340.30px;left:3.500px;width:197px"></div>
<svg style="left:4.75px;top:342.3px" width="12" height="12" viewBox="0 0 12 12"><rect x=".3" y=".3" width="11.400" height="11.400" rx="1.600" fill="#a30d18" stroke="#8a0a12" stroke-width=".6"/><circle cx="6.100" cy="5.900" r="4.100" fill="#f7f1f0"/><path d="M6.800 2.300 C4.500 3.400 4.200 5.300 5.600 6.500 C6.800 7.500 6.300 8.900 4.900 9.400" fill="none" stroke="#98101a" stroke-width="1.250" stroke-linecap="round"/><path d="M7.900 4.200 C8.500 5.200 8.300 6.500 7.400 7.400" fill="none" stroke="#c05a60" stroke-width=".9" stroke-linecap="round"/><path d="M2.600 8.600 Q3.600 10.400 6 10.300" fill="none" stroke="#f0c8c8" stroke-width=".6"/></svg>
<div class="t" style="left:23.200px;top:342.50px;font-size:9px;color:#2e2c24">Ray Shield</div>
<div class="row d" style="top:357.51px;left:3.500px;width:197px"></div>
<svg style="left:4.75px;top:359.51px" width="12" height="12" viewBox="0 0 12 12"><rect x=".3" y=".3" width="11.400" height="11.400" rx="1.600" fill="#a30d18" stroke="#8a0a12" stroke-width=".6"/><circle cx="6.100" cy="5.900" r="4.100" fill="#f7f1f0"/><path d="M6.800 2.300 C4.500 3.400 4.200 5.300 5.600 6.500 C6.800 7.500 6.300 8.900 4.900 9.400" fill="none" stroke="#98101a" stroke-width="1.250" stroke-linecap="round"/><path d="M7.900 4.200 C8.500 5.200 8.300 6.500 7.400 7.400" fill="none" stroke="#c05a60" stroke-width=".9" stroke-linecap="round"/><path d="M2.600 8.600 Q3.600 10.400 6 10.300" fill="none" stroke="#f0c8c8" stroke-width=".6"/></svg>
<div class="t" style="left:23.200px;top:359.71px;font-size:9px;color:#2e2c24">Red in Tooth and Claw</div>
<div class="row" style="top:374.72px;left:3.500px;width:197px"></div>
<svg style="left:4.75px;top:376.72px" width="12" height="12" viewBox="0 0 12 12"><rect x=".3" y=".3" width="11.400" height="11.400" rx="1.600" fill="#a30d18" stroke="#8a0a12" stroke-width=".6"/><circle cx="6.100" cy="5.900" r="4.100" fill="#f7f1f0"/><path d="M6.800 2.300 C4.500 3.400 4.200 5.300 5.600 6.500 C6.800 7.500 6.300 8.900 4.900 9.400" fill="none" stroke="#98101a" stroke-width="1.250" stroke-linecap="round"/><path d="M7.900 4.200 C8.500 5.200 8.300 6.500 7.400 7.400" fill="none" stroke="#c05a60" stroke-width=".9" stroke-linecap="round"/><path d="M2.600 8.600 Q3.600 10.400 6 10.300" fill="none" stroke="#f0c8c8" stroke-width=".6"/></svg>
<div class="t" style="left:23.200px;top:376.92px;font-size:9px;color:#2e2c24">Secret Sign</div>
<div class="row d" style="top:391.93px;left:3.500px;width:197px"></div>
<svg style="left:4.75px;top:393.93px" width="12" height="12" viewBox="0 0 12 12"><rect x=".3" y=".3" width="11.400" height="11.400" rx="1.600" fill="#a30d18" stroke="#8a0a12" stroke-width=".6"/><circle cx="6.100" cy="5.900" r="4.100" fill="#f7f1f0"/><path d="M6.800 2.300 C4.500 3.400 4.200 5.300 5.600 6.500 C6.800 7.500 6.300 8.900 4.900 9.400" fill="none" stroke="#98101a" stroke-width="1.250" stroke-linecap="round"/><path d="M7.900 4.200 C8.500 5.200 8.300 6.500 7.400 7.400" fill="none" stroke="#c05a60" stroke-width=".9" stroke-linecap="round"/><path d="M2.600 8.600 Q3.600 10.400 6 10.300" fill="none" stroke="#f0c8c8" stroke-width=".6"/></svg>
<div class="t" style="left:23.200px;top:394.13px;font-size:9px;color:#2e2c24">Snake&#x27;s Swiftness</div>
<div class="row" style="top:409.14px;left:3.500px;width:197px"></div>
<svg style="left:4.75px;top:411.14px" width="12" height="12" viewBox="0 0 12 12"><rect x=".3" y=".3" width="11.400" height="11.400" rx="1.600" fill="#a30d18" stroke="#8a0a12" stroke-width=".6"/><circle cx="6.100" cy="5.900" r="4.100" fill="#f7f1f0"/><path d="M6.800 2.300 C4.500 3.400 4.200 5.300 5.600 6.500 C6.800 7.500 6.300 8.900 4.900 9.400" fill="none" stroke="#98101a" stroke-width="1.250" stroke-linecap="round"/><path d="M7.900 4.200 C8.500 5.200 8.300 6.500 7.400 7.400" fill="none" stroke="#c05a60" stroke-width=".9" stroke-linecap="round"/><path d="M2.600 8.600 Q3.600 10.400 6 10.300" fill="none" stroke="#f0c8c8" stroke-width=".6"/></svg>
<div class="t" style="left:23.200px;top:411.34px;font-size:9px;color:#2e2c24">Solipsism</div>
<div class="row d" style="top:426.35px;left:3.500px;width:197px"></div>
<svg style="left:4.75px;top:428.35px" width="12" height="12" viewBox="0 0 12 12"><rect x=".3" y=".3" width="11.400" height="11.400" rx="1.600" fill="#a30d18" stroke="#8a0a12" stroke-width=".6"/><circle cx="6.100" cy="5.900" r="4.100" fill="#f7f1f0"/><path d="M6.800 2.300 C4.500 3.400 4.200 5.300 5.600 6.500 C6.800 7.500 6.300 8.900 4.900 9.400" fill="none" stroke="#98101a" stroke-width="1.250" stroke-linecap="round"/><path d="M7.900 4.200 C8.500 5.200 8.300 6.500 7.400 7.400" fill="none" stroke="#c05a60" stroke-width=".9" stroke-linecap="round"/><path d="M2.600 8.600 Q3.600 10.400 6 10.300" fill="none" stroke="#f0c8c8" stroke-width=".6"/></svg>
<div class="t" style="left:23.200px;top:428.55px;font-size:9px;color:#2e2c24">Sound Lance</div>
<div class="row" style="top:443.56px;left:3.500px;width:197px"></div>
<svg style="left:4.75px;top:445.56px" width="12" height="12" viewBox="0 0 12 12"><rect x=".3" y=".3" width="11.400" height="11.400" rx="1.600" fill="#a30d18" stroke="#8a0a12" stroke-width=".6"/><circle cx="6.100" cy="5.900" r="4.100" fill="#f7f1f0"/><path d="M6.800 2.300 C4.500 3.400 4.200 5.300 5.600 6.500 C6.800 7.500 6.300 8.900 4.900 9.400" fill="none" stroke="#98101a" stroke-width="1.250" stroke-linecap="round"/><path d="M7.900 4.200 C8.500 5.200 8.300 6.500 7.400 7.400" fill="none" stroke="#c05a60" stroke-width=".9" stroke-linecap="round"/><path d="M2.600 8.600 Q3.600 10.400 6 10.300" fill="none" stroke="#f0c8c8" stroke-width=".6"/></svg>
<div class="t" style="left:23.200px;top:445.76px;font-size:9px;color:#2e2c24">Speechlink</div>
<div class="row d" style="top:460.77px;left:3.500px;width:197px"></div>
<svg style="left:4.75px;top:462.77px" width="12" height="12" viewBox="0 0 12 12"><rect x=".3" y=".3" width="11.400" height="11.400" rx="1.600" fill="#a30d18" stroke="#8a0a12" stroke-width=".6"/><circle cx="6.100" cy="5.900" r="4.100" fill="#f7f1f0"/><path d="M6.800 2.300 C4.500 3.400 4.200 5.300 5.600 6.500 C6.800 7.500 6.300 8.900 4.900 9.400" fill="none" stroke="#98101a" stroke-width="1.250" stroke-linecap="round"/><path d="M7.900 4.200 C8.500 5.200 8.300 6.500 7.400 7.400" fill="none" stroke="#c05a60" stroke-width=".9" stroke-linecap="round"/><path d="M2.600 8.600 Q3.600 10.400 6 10.300" fill="none" stroke="#f0c8c8" stroke-width=".6"/></svg>
<div class="t" style="left:23.200px;top:462.97px;font-size:9px;color:#2e2c24">Spell Conversion</div>
<div class="row" style="top:477.98px;left:3.500px;width:197px"></div>
<svg style="left:4.75px;top:479.98px" width="12" height="12" viewBox="0 0 12 12"><rect x=".3" y=".3" width="11.400" height="11.400" rx="1.600" fill="#a30d18" stroke="#8a0a12" stroke-width=".6"/><circle cx="6.100" cy="5.900" r="4.100" fill="#f7f1f0"/><path d="M6.800 2.300 C4.500 3.400 4.200 5.300 5.600 6.500 C6.800 7.500 6.300 8.900 4.900 9.400" fill="none" stroke="#98101a" stroke-width="1.250" stroke-linecap="round"/><path d="M7.900 4.200 C8.500 5.200 8.300 6.500 7.400 7.400" fill="none" stroke="#c05a60" stroke-width=".9" stroke-linecap="round"/><path d="M2.600 8.600 Q3.600 10.400 6 10.300" fill="none" stroke="#f0c8c8" stroke-width=".6"/></svg>
<div class="t" style="left:23.200px;top:480.18px;font-size:9px;color:#2e2c24">Tactical Precision</div>
<div class="row d" style="top:495.19px;left:3.500px;width:197px"></div>
<svg style="left:4.75px;top:497.19px" width="12" height="12" viewBox="0 0 12 12"><rect x=".3" y=".3" width="11.400" height="11.400" rx="1.600" fill="#a30d18" stroke="#8a0a12" stroke-width=".6"/><circle cx="6.100" cy="5.900" r="4.100" fill="#f7f1f0"/><path d="M6.800 2.300 C4.500 3.400 4.200 5.300 5.600 6.500 C6.800 7.500 6.300 8.900 4.900 9.400" fill="none" stroke="#98101a" stroke-width="1.250" stroke-linecap="round"/><path d="M7.900 4.200 C8.500 5.200 8.300 6.500 7.400 7.400" fill="none" stroke="#c05a60" stroke-width=".9" stroke-linecap="round"/><path d="M2.600 8.600 Q3.600 10.400 6 10.300" fill="none" stroke="#f0c8c8" stroke-width=".6"/></svg>
<div class="t" style="left:23.200px;top:497.39px;font-size:9px;color:#2e2c24">Thought Crystal</div>
<div class="row" style="top:512.40px;left:3.500px;width:197px"></div>
<svg style="left:4.75px;top:514.4px" width="12" height="12" viewBox="0 0 12 12"><rect x=".3" y=".3" width="11.400" height="11.400" rx="1.600" fill="#a30d18" stroke="#8a0a12" stroke-width=".6"/><circle cx="6.100" cy="5.900" r="4.100" fill="#f7f1f0"/><path d="M6.800 2.300 C4.500 3.400 4.200 5.300 5.600 6.500 C6.800 7.500 6.300 8.900 4.900 9.400" fill="none" stroke="#98101a" stroke-width="1.250" stroke-linecap="round"/><path d="M7.900 4.200 C8.500 5.200 8.300 6.500 7.400 7.400" fill="none" stroke="#c05a60" stroke-width=".9" stroke-linecap="round"/><path d="M2.600 8.600 Q3.600 10.400 6 10.300" fill="none" stroke="#f0c8c8" stroke-width=".6"/></svg>
<div class="t" style="left:23.200px;top:514.60px;font-size:9px;color:#2e2c24">Treasure Scent</div>
<div class="row d" style="top:529.61px;left:3.500px;width:197px"></div>
<svg style="left:4.75px;top:531.61px" width="12" height="12" viewBox="0 0 12 12"><rect x=".3" y=".3" width="11.400" height="11.400" rx="1.600" fill="#a30d18" stroke="#8a0a12" stroke-width=".6"/><circle cx="6.100" cy="5.900" r="4.100" fill="#f7f1f0"/><path d="M6.800 2.300 C4.500 3.400 4.200 5.300 5.600 6.500 C6.800 7.500 6.300 8.900 4.900 9.400" fill="none" stroke="#98101a" stroke-width="1.250" stroke-linecap="round"/><path d="M7.900 4.200 C8.500 5.200 8.300 6.500 7.400 7.400" fill="none" stroke="#c05a60" stroke-width=".9" stroke-linecap="round"/><path d="M2.600 8.600 Q3.600 10.400 6 10.300" fill="none" stroke="#f0c8c8" stroke-width=".6"/></svg>
<div class="t" style="left:23.200px;top:531.81px;font-size:9px;color:#2e2c24">True Casting</div>
<div class="row" style="top:546.82px;left:3.500px;width:197px"></div>
<svg style="left:4.75px;top:548.82px" width="12" height="12" viewBox="0 0 12 12"><rect x=".3" y=".3" width="11.400" height="11.400" rx="1.600" fill="#a30d18" stroke="#8a0a12" stroke-width=".6"/><circle cx="6.100" cy="5.900" r="4.100" fill="#f7f1f0"/><path d="M6.800 2.300 C4.500 3.400 4.200 5.300 5.600 6.500 C6.800 7.500 6.300 8.900 4.900 9.400" fill="none" stroke="#98101a" stroke-width="1.250" stroke-linecap="round"/><path d="M7.900 4.200 C8.500 5.200 8.300 6.500 7.400 7.400" fill="none" stroke="#c05a60" stroke-width=".9" stroke-linecap="round"/><path d="M2.600 8.600 Q3.600 10.400 6 10.300" fill="none" stroke="#f0c8c8" stroke-width=".6"/></svg>
<div class="t" style="left:23.200px;top:549.02px;font-size:9px;color:#2e2c24">Utter Disappointment</div>
<div class="row d" style="top:564.03px;left:3.500px;width:197px"></div>
<svg style="left:4.75px;top:566.03px" width="12" height="12" viewBox="0 0 12 12"><rect x=".3" y=".3" width="11.400" height="11.400" rx="1.600" fill="#a30d18" stroke="#8a0a12" stroke-width=".6"/><circle cx="6.100" cy="5.900" r="4.100" fill="#f7f1f0"/><path d="M6.800 2.300 C4.500 3.400 4.200 5.300 5.600 6.500 C6.800 7.500 6.300 8.900 4.900 9.400" fill="none" stroke="#98101a" stroke-width="1.250" stroke-linecap="round"/><path d="M7.900 4.200 C8.500 5.200 8.300 6.500 7.400 7.400" fill="none" stroke="#c05a60" stroke-width=".9" stroke-linecap="round"/><path d="M2.600 8.600 Q3.600 10.400 6 10.300" fill="none" stroke="#f0c8c8" stroke-width=".6"/></svg>
<div class="t" style="left:23.200px;top:566.23px;font-size:9px;color:#2e2c24">Warning</div>
<div class="row" style="top:581.24px;left:3.500px;width:197px"></div>
<svg style="left:4.75px;top:583.24px" width="12" height="12" viewBox="0 0 12 12"><rect x=".3" y=".3" width="11.400" height="11.400" rx="1.600" fill="#a30d18" stroke="#8a0a12" stroke-width=".6"/><circle cx="6.100" cy="5.900" r="4.100" fill="#f7f1f0"/><path d="M6.800 2.300 C4.500 3.400 4.200 5.300 5.600 6.500 C6.800 7.500 6.300 8.900 4.900 9.400" fill="none" stroke="#98101a" stroke-width="1.250" stroke-linecap="round"/><path d="M7.900 4.200 C8.500 5.200 8.300 6.500 7.400 7.400" fill="none" stroke="#c05a60" stroke-width=".9" stroke-linecap="round"/><path d="M2.600 8.600 Q3.600 10.400 6 10.300" fill="none" stroke="#f0c8c8" stroke-width=".6"/></svg>
<div class="t" style="left:23.200px;top:583.44px;font-size:9px;color:#2e2c24">Wave of Pain</div>
<div class="row d" style="top:598.45px;left:3.500px;width:197px"></div>
<svg style="left:4.75px;top:600.45px" width="12" height="12" viewBox="0 0 12 12"><rect x=".3" y=".3" width="11.400" height="11.400" rx="1.600" fill="#a30d18" stroke="#8a0a12" stroke-width=".6"/><circle cx="6.100" cy="5.900" r="4.100" fill="#f7f1f0"/><path d="M6.800 2.300 C4.500 3.400 4.200 5.300 5.600 6.500 C6.800 7.500 6.300 8.900 4.900 9.400" fill="none" stroke="#98101a" stroke-width="1.250" stroke-linecap="round"/><path d="M7.900 4.200 C8.500 5.200 8.300 6.500 7.400 7.400" fill="none" stroke="#c05a60" stroke-width=".9" stroke-linecap="round"/><path d="M2.600 8.600 Q3.600 10.400 6 10.300" fill="none" stroke="#f0c8c8" stroke-width=".6"/></svg>
<div class="t" style="left:23.200px;top:600.65px;font-size:9px;color:#2e2c24">Whispers of Civilization</div>
</div>
<div class="sbl" style="left:209px;top:12px;height:600px;background:#c69058"></div>
<svg style="left:206.700px;top:4.500px" width="5" height="8" viewBox="0 0 7 9"><path d="M3.500 0 L6.500 4 L.500 4 Z" fill="#e0885a"/><path d="M3.500 3 L6.500 7.500 L.500 7.500 Z" fill="#6a84b4"/></svg>
<svg style="left:206.700px;top:611px" width="5" height="8" viewBox="0 0 7 9"><path d="M3.500 6 L6.500 1.500 L.500 1.500 Z" fill="#6a84b4"/><path d="M3.500 9 L6.500 5 L.500 5 Z" fill="#e0885a"/></svg>
<div class="sbt" style="left:206.700px;top:98px;height:483px"></div>
</div>
<svg style="left:70px;top:660px" width="12" height="22" viewBox="0 0 12 22"><ellipse cx="4" cy="5.500" rx="3" ry="4.500" fill="none" stroke="#c8a432" stroke-width="1.400"/><path d="M5.500 9.500 L9.500 20" stroke="#b89030" stroke-width="1.300"/></svg>
<div class="a" style="left:81.500px;top:661.500px;width:190px;height:17.500px;border-radius:6px;background:#d5d5bd;border:1px solid #1a1a4a"></div>
<svg style="left:290px;top:680.500px" width="13" height="13.500" viewBox="0 0 13 13.500"><path d="M13 0 L13 13.500 L0 13.500 Z" fill="#c8861c"/><path d="M13 4 L4 13.500 M13 8 L8 13.500" stroke="#8a5a10" stroke-width="1"/></svg>
<svg style="left:117.500px;top:655.500px" width="41" height="44" viewBox="0 0 41 44"><path d="M20.500 0 L39.500 10 L40.500 32 L20.500 44 L.5 32 L1.500 10 Z" fill="#050505"/><path d="M20.500 7 L33 27 L8 27 Z" fill="#0c0c0c" stroke="#1c1c1c" stroke-width=".6"/></svg>
<div class="t b" style="left:131.8px;top:671.5px;font-size:11.5px;line-height:11.5px;color:#f4f4f4;opacity:1;">20</div>
<div class="t b" style="left:123.5px;top:663px;font-size:9px;line-height:9px;color:#f4f4f4;opacity:0.95;transform:rotate(-35deg) scaleX(1);transform-origin:50% 50%;">8</div>
<div class="t b" style="left:146.5px;top:664.5px;font-size:8.5px;line-height:8.5px;color:#f4f4f4;opacity:0.8;transform:rotate(40deg) scaleX(1);transform-origin:50% 50%;">2</div>
<div class="t b" style="left:128px;top:656px;font-size:6px;line-height:6px;color:#f4f4f4;opacity:0.8;transform:rotate(-70deg) scaleX(1);transform-origin:50% 50%;">6</div>
<div class="t " style="left:142px;top:656.5px;font-size:5px;line-height:5px;color:#f4f4f4;opacity:0.6;transform:rotate(20deg) scaleX(1);transform-origin:50% 50%;">20</div>
<div class="t " style="left:135px;top:687px;font-size:5px;line-height:5px;color:#f4f4f4;opacity:0.45;transform:rotate(170deg) scaleX(1);transform-origin:50% 50%;">17</div>
<div class="t " style="left:120px;top:674px;font-size:5px;line-height:5px;color:#f4f4f4;opacity:0.6;transform:rotate(-80deg) scaleX(1);transform-origin:50% 50%;">14</div>
<div class="t " style="left:152px;top:676px;font-size:5px;line-height:5px;color:#f4f4f4;opacity:0.4;transform:rotate(80deg) scaleX(1);transform-origin:50% 50%;">9</div>
<svg style="left:161.500px;top:658.500px" width="44" height="40" viewBox="0 0 44 40"><path d="M22 0 L36 4.500 L43.500 17 L40 31 L22 40 L4 31 L.5 17 L8 4.500 Z" fill="#050505"/><path d="M22 6 L34 15 L29.500 29 L14.500 29 L10 15 Z" fill="#0b0b0b" stroke="#1a1a1a" stroke-width=".6"/></svg>
<div class="t b" style="left:175.5px;top:670.5px;font-size:14px;line-height:14px;color:#f4f4f4;opacity:1;transform:rotate(0deg) scaleX(0.64);transform-origin:50% 50%;">12</div>
<div class="t b" style="left:168.5px;top:658.5px;font-size:9.5px;line-height:9.5px;color:#f4f4f4;opacity:0.95;transform:rotate(60deg) scaleX(1);transform-origin:50% 50%;">8</div>
<div class="t b" style="left:190.5px;top:660px;font-size:6.5px;line-height:6.5px;color:#f4f4f4;opacity:0.5;transform:rotate(-20deg) scaleX(1);transform-origin:50% 50%;">6</div>
<div class="t " style="left:164.5px;top:679px;font-size:5.5px;line-height:5.5px;color:#f4f4f4;opacity:0.6;transform:rotate(80deg) scaleX(1);transform-origin:50% 50%;">10</div>
<div class="t b" style="left:196px;top:678px;font-size:6px;line-height:6px;color:#f4f4f4;opacity:0.4;transform:rotate(10deg) scaleX(1);transform-origin:50% 50%;">4</div>
<svg style="left:207px;top:660.500px" width="44" height="33" viewBox="0 0 44 33"><path d="M21.500 0 L36 4 L43.500 12 L42 25 L22 32.500 L2 25 L.5 12 L8 4 Z" fill="#050505"/><path d="M21.500 1 L31 16 L21.500 25 L12 16 Z" fill="#0d0d0d" stroke="#1c1c1c" stroke-width=".6"/><ellipse cx="21.500" cy="5" rx="3" ry="3.500" fill="#2a2a2a"/></svg>
<div class="t b" style="left:220.7px;top:675.5px;font-size:14.5px;line-height:14.5px;color:#f4f4f4;opacity:1;transform:rotate(0deg) scaleX(0.72);transform-origin:50% 50%;">10</div>
<div class="t b" style="left:210px;top:668.5px;font-size:10px;line-height:10px;color:#f4f4f4;opacity:0.95;transform:rotate(-10deg) scaleX(1);transform-origin:50% 50%;">2</div>
<div class="t " style="left:239.5px;top:668px;font-size:8.5px;line-height:8.5px;color:#f4f4f4;opacity:0.55;transform:rotate(-25deg) scaleX(1);transform-origin:50% 50%;">8</div>
<svg style="left:255px;top:655.500px" width="36" height="41" viewBox="0 0 36 41"><path d="M18 0 L37 28 L18 41.500 L-1 28 Z" fill="#050505"/><path d="M18 1 L18.500 8" stroke="#6a6a6a" stroke-width="1.500"/></svg>
<div class="t b" style="left:267.8px;top:666.5px;font-size:17.5px;line-height:17.5px;color:#f4f4f4;opacity:1;">8</div>
<div class="t b" style="left:257px;top:663px;font-size:10px;line-height:10px;color:#f4f4f4;opacity:0.95;transform:rotate(40deg) scaleX(1);transform-origin:50% 50%;">2</div>
<div class="t " style="left:281px;top:663px;font-size:9px;line-height:9px;color:#f4f4f4;opacity:0.45;transform:rotate(-35deg) scaleX(1);transform-origin:50% 50%;">6</div>
<div class="t " style="left:270px;top:691px;font-size:7px;line-height:7px;color:#f4f4f4;opacity:0.45;transform:rotate(180deg) scaleX(1);transform-origin:50% 50%;">4</div>
<svg style="left:304px;top:661px" width="31" height="32" viewBox="0 0 31 32"><rect x=".5" y=".5" width="30" height="31" rx="2.500" fill="#070707"/><path d="M2 1.200 H29" stroke="#4a4a4a" stroke-width="1.200"/></svg>
<div class="t b" style="left:311.5px;top:667px;font-size:18.5px;line-height:18.5px;color:#f4f4f4;opacity:1;transform:rotate(0deg) scaleX(0.9);transform-origin:50% 50%;">6.</div>
<svg style="left:343.500px;top:653.500px" width="41" height="38" viewBox="0 0 41 38"><path d="M20.500 0 L40.500 34 L36 37 L5 37 L.5 34 Z" fill="#080808"/><path d="M20.500 6 L33 33 L8 33 Z" fill="#0e0e0e"/></svg>
<div class="t b" style="left:357.5px;top:669px;font-size:8px;line-height:8px;color:#f4f4f4;opacity:0.95;transform:rotate(-5deg) scaleX(1);transform-origin:50% 50%;">4</div>
<div class="t b" style="left:348.5px;top:675.5px;font-size:8.5px;line-height:8.5px;color:#f4f4f4;opacity:1;transform:rotate(-50deg) scaleX(1);transform-origin:50% 50%;">2</div>
<div class="t b" style="left:359.5px;top:658.5px;font-size:8px;line-height:8px;color:#f4f4f4;opacity:0.95;transform:rotate(10deg) scaleX(1);transform-origin:50% 50%;">3</div>
<div class="t " style="left:368px;top:662px;font-size:7px;line-height:7px;color:#f4f4f4;opacity:0.6;transform:rotate(25deg) scaleX(1);transform-origin:50% 50%;">1</div>
<div class="t " style="left:356px;top:683px;font-size:6px;line-height:6px;color:#f4f4f4;opacity:0.4;transform:rotate(180deg) scaleX(1);transform-origin:50% 50%;">4</div>
<div class="t " style="left:371px;top:684px;font-size:5px;line-height:5px;color:#f4f4f4;opacity:0.4;">2</div>
<svg style="left:387.500px;top:659.500px" width="44" height="34" viewBox="0 0 44 34"><path d="M20 0 L34 5 L43.500 14 L41 24 L22 33.500 L6 27 L.5 13 L7 6 Z" fill="#050505"/><ellipse cx="20.500" cy="6.500" rx="2.500" ry="4.500" fill="#3c3c3c" transform="rotate(12 20 7)"/><ellipse cx="20.800" cy="4.500" rx="1.300" ry="2" fill="#7a7a7a" transform="rotate(12 20 7)"/></svg>
<div class="t " style="left:401.2px;top:674.8px;font-size:14.5px;line-height:14.5px;color:#f4f4f4;opacity:1;">00</div>
<div class="t " style="left:389.5px;top:667.5px;font-size:10px;line-height:10px;color:#f4f4f4;opacity:0.95;transform:rotate(30deg) scaleX(1);transform-origin:50% 50%;">20</div>
<div class="t " style="left:419px;top:668.5px;font-size:8.5px;line-height:8.5px;color:#f4f4f4;opacity:0.55;transform:rotate(-70deg) scaleX(1);transform-origin:50% 50%;">80</div>
</div>
</body></html>
